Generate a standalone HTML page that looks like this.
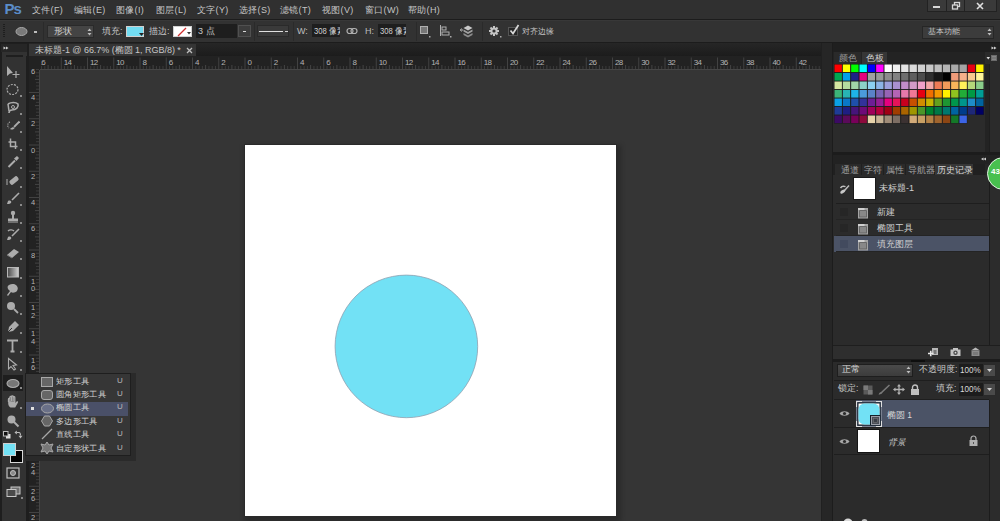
<!DOCTYPE html>
<html><head><meta charset="utf-8"><style>
html,body{margin:0;padding:0;width:1000px;height:521px;overflow:hidden;background:#323232;}
body{position:relative;font-family:"Liberation Sans",sans-serif;}
div{position:absolute;}
.t{white-space:nowrap;line-height:1.1;}
</style></head><body>
<div style="left:0px;top:0px;width:1000px;height:521px;background:#323232;"></div>
<div style="left:0px;top:0px;width:1000px;height:19px;background:#303030;"></div>
<div style="left:0px;top:19px;width:1000px;height:1px;background:#1c1c1c;"></div>
<div class="t" style="left:4.5px;top:0.5px;font-size:15px;color:#5b8dc9;font-weight:bold;letter-spacing:-1px;">Ps</div>
<div class="t" style="left:32px;top:5.5px;font-size:9px;color:#c4c4c4;letter-spacing:0.3px;">文件(F)</div>
<div class="t" style="left:74px;top:5.5px;font-size:9px;color:#c4c4c4;letter-spacing:0.3px;">编辑(E)</div>
<div class="t" style="left:116px;top:5.5px;font-size:9px;color:#c4c4c4;letter-spacing:0.3px;">图像(I)</div>
<div class="t" style="left:156px;top:5.5px;font-size:9px;color:#c4c4c4;letter-spacing:0.3px;">图层(L)</div>
<div class="t" style="left:197px;top:5.5px;font-size:9px;color:#c4c4c4;letter-spacing:0.3px;">文字(Y)</div>
<div class="t" style="left:239px;top:5.5px;font-size:9px;color:#c4c4c4;letter-spacing:0.3px;">选择(S)</div>
<div class="t" style="left:280px;top:5.5px;font-size:9px;color:#c4c4c4;letter-spacing:0.3px;">滤镜(T)</div>
<div class="t" style="left:322px;top:5.5px;font-size:9px;color:#c4c4c4;letter-spacing:0.3px;">视图(V)</div>
<div class="t" style="left:365px;top:5.5px;font-size:9px;color:#c4c4c4;letter-spacing:0.3px;">窗口(W)</div>
<div class="t" style="left:408px;top:5.5px;font-size:9px;color:#c4c4c4;letter-spacing:0.3px;">帮助(H)</div>
<div style="left:927px;top:0px;width:70px;height:12px;background:#3a3a3a;border:1px solid #222;border-top:none;box-sizing:border-box;"></div>
<div style="left:946px;top:0px;width:1px;height:12px;background:#222;"></div>
<div style="left:964px;top:0px;width:1px;height:12px;background:#222;"></div>
<div style="left:933px;top:6px;width:7px;height:2px;background:#d8d8d8;"></div>
<svg style="position:absolute;left:951px;top:1px;" width="10" height="10" viewBox="0 0 10 10"><rect x="3.5" y="1.5" width="5" height="4" fill="none" stroke="#d8d8d8" stroke-width="1.3"/><rect x="1.5" y="4" width="5" height="4" fill="#3a3a3a" stroke="#d8d8d8" stroke-width="1.3"/></svg>
<svg style="position:absolute;left:976px;top:2px;" width="8" height="8" viewBox="0 0 8 8"><path d="M1 1L7 7M7 1L1 7" stroke="#e0e0e0" stroke-width="1.6"/></svg>
<div style="left:0px;top:20px;width:1000px;height:23px;background:#323232;"></div>
<div style="left:0px;top:20px;width:1000px;height:1px;background:#383838;"></div>
<div style="left:0px;top:42px;width:1000px;height:1px;background:#1c1c1c;"></div>
<div style="left:3px;top:24px;width:2px;height:1px;background:#1e1e1e;"></div>
<div style="left:3px;top:26px;width:2px;height:1px;background:#1e1e1e;"></div>
<div style="left:3px;top:28px;width:2px;height:1px;background:#1e1e1e;"></div>
<div style="left:3px;top:30px;width:2px;height:1px;background:#1e1e1e;"></div>
<div style="left:3px;top:32px;width:2px;height:1px;background:#1e1e1e;"></div>
<div style="left:3px;top:34px;width:2px;height:1px;background:#1e1e1e;"></div>
<div style="left:3px;top:36px;width:2px;height:1px;background:#1e1e1e;"></div>
<svg style="position:absolute;left:15px;top:26px;" width="14" height="11" viewBox="0 0 14 11"><ellipse cx="6.5" cy="5.5" rx="5.5" ry="4" fill="#7a7a7a" stroke="#a8a8a8" stroke-width="1"/></svg>
<div style="left:34px;top:31px;width:3px;height:2px;background:#bdbdbd;"></div>
<div style="left:43px;top:22px;width:1px;height:19px;background:#2a2a2a;"></div>
<div style="left:47px;top:25px;width:47px;height:13px;background:#444;border:1px solid #2a2a2a;box-sizing:border-box;"></div>
<div class="t" style="left:54px;top:27px;font-size:9px;color:#d0d0d0;">形状</div>
<svg style="position:absolute;left:87px;top:28px;" width="5" height="8" viewBox="0 0 5 8"><path d="M0.5 3L2.5 0.5L4.5 3ZM0.5 5L2.5 7.5L4.5 5Z" fill="#bdbdbd"/></svg>
<div class="t" style="left:102px;top:27px;font-size:9px;color:#c4c4c4;">填充:</div>
<div style="left:126px;top:26px;width:18px;height:11px;background:#72dcf2;border:1px solid #d0d0d0;box-sizing:border-box;"></div>
<svg style="position:absolute;left:139px;top:32px;" width="5" height="5" viewBox="0 0 5 5"><path d="M0 1H5L2.5 4Z" fill="#222"/></svg>
<div class="t" style="left:149px;top:27px;font-size:9px;color:#c4c4c4;">描边:</div>
<div style="left:173px;top:26px;width:19px;height:11px;background:#ffffff;border:1px solid #d0d0d0;box-sizing:border-box;"></div>
<svg style="position:absolute;left:173px;top:26px;" width="19" height="11" viewBox="0 0 19 11"><path d="M5 10L13 2" stroke="#d23030" stroke-width="1.3"/><path d="M14 6H18L16 8.5Z" fill="#333"/></svg>
<div style="left:196px;top:24px;width:41px;height:14px;background:#1e1e1e;"></div>
<div class="t" style="left:198px;top:27px;font-size:9px;color:#c8c8c8;">3 点</div>
<div style="left:238px;top:25px;width:13px;height:12px;background:#3c3c3c;border:1px solid #505050;box-sizing:border-box;"></div>
<div style="left:243px;top:30.5px;width:3px;height:1.5px;background:#d8d8d8;"></div>
<div style="left:254px;top:22px;width:1px;height:19px;background:#2a2a2a;"></div>
<div style="left:257px;top:25px;width:32px;height:12px;background:#3a3a3a;border:1px solid #2a2a2a;box-sizing:border-box;"></div>
<div style="left:259px;top:30.5px;width:24px;height:1.7px;background:#e0e0e0;"></div>
<div style="left:285px;top:31px;width:3px;height:1px;background:#cfcfcf;"></div>
<div style="left:293px;top:22px;width:1px;height:19px;background:#2a2a2a;"></div>
<div class="t" style="left:297px;top:27px;font-size:9px;color:#bdbdbd;">W:</div>
<div style="left:312px;top:24px;width:28px;height:13px;background:#1e1e1e;overflow:hidden;"></div>
<div style="left:312px;top:24px;width:28px;height:13px;overflow:hidden;"><div class="t" style="left:1.5px;top:2.6px;font-size:9px;color:#d0d0d0;transform:scaleX(0.85);transform-origin:0 0;">308 像素</div></div>
<svg style="position:absolute;left:346px;top:27px;" width="12" height="8" viewBox="0 0 12 8"><rect x="1" y="1.5" width="6" height="5" rx="2.5" fill="none" stroke="#b0b0b0" stroke-width="1.2"/><rect x="5" y="1.5" width="6" height="5" rx="2.5" fill="none" stroke="#b0b0b0" stroke-width="1.2"/></svg>
<div class="t" style="left:365px;top:27px;font-size:9px;color:#bdbdbd;">H:</div>
<div style="left:378px;top:24px;width:28px;height:13px;background:#1e1e1e;overflow:hidden;"></div>
<div style="left:378px;top:24px;width:28px;height:13px;overflow:hidden;"><div class="t" style="left:1.5px;top:2.6px;font-size:9px;color:#d0d0d0;transform:scaleX(0.85);transform-origin:0 0;">308 像素</div></div>
<div style="left:416px;top:22px;width:1px;height:19px;background:#2a2a2a;"></div>
<svg style="position:absolute;left:419px;top:25px;" width="12" height="13" viewBox="0 0 12 13"><rect x="1.5" y="1.5" width="7" height="7" fill="#777" stroke="#b0b0b0"/><rect x="10" y="11" width="1.5" height="1.5" fill="#aaa"/></svg>
<svg style="position:absolute;left:439px;top:24px;" width="13" height="14" viewBox="0 0 13 14"><path d="M1.5 1V12" stroke="#b0b0b0"/><rect x="3" y="3" width="4" height="3" fill="none" stroke="#b0b0b0"/><rect x="3" y="8" width="7" height="3" fill="none" stroke="#b0b0b0"/><rect x="11" y="12" width="1.5" height="1.5" fill="#aaa"/></svg>
<svg style="position:absolute;left:460px;top:24px;" width="15" height="15" viewBox="0 0 15 15"><path d="M8 1.5L12.5 4L8 6.5L3.5 4Z" fill="#c8c8c8"/><path d="M3.5 5.5L8 8L12.5 5.5V7.5L8 10L3.5 7.5Z" fill="#a0a0a0"/><path d="M3.5 9L8 11.5L12.5 9V11L8 13.5L3.5 11Z" fill="#8c8c8c"/><path d="M0.5 6H3M1.5 4.5L0.5 6L1.5 7.5" stroke="#bbb" stroke-width="1"/></svg>
<div style="left:482px;top:22px;width:1px;height:19px;background:#2a2a2a;"></div>
<svg style="position:absolute;left:489px;top:26px;" width="13" height="12" viewBox="0 0 13 12"><g fill="#c4c4c4"><circle cx="5" cy="5" r="3.6"/><rect x="4" y="0" width="2" height="10"/><rect x="0" y="4" width="10" height="2"/><rect x="4" y="0" width="2" height="10" transform="rotate(45 5 5)"/><rect x="4" y="0" width="2" height="10" transform="rotate(-45 5 5)"/></g><circle cx="5" cy="5" r="1.6" fill="#323232"/><rect x="11" y="10" width="1.5" height="1.5" fill="#aaa"/></svg>
<div style="left:508px;top:27px;width:10px;height:9px;background:#262626;border:1px solid #555;box-sizing:border-box;"></div>
<svg style="position:absolute;left:508px;top:23px;" width="13" height="13" viewBox="0 0 13 13"><path d="M2.5 7.5L5 10.5L10.5 2" fill="none" stroke="#d8d8d8" stroke-width="1.7"/></svg>
<div class="t" style="left:522px;top:28px;font-size:8px;color:#c4c4c4;">对齐边缘</div>
<div style="left:922px;top:26px;width:72px;height:13px;background:#3c3c3c;border:1px solid #262626;box-sizing:border-box;"></div>
<div class="t" style="left:928px;top:28px;font-size:8px;color:#c4c4c4;">基本功能</div>
<svg style="position:absolute;left:987px;top:28px;" width="5" height="8" viewBox="0 0 5 8"><path d="M0.5 3L2.5 0.5L4.5 3ZM0.5 5L2.5 7.5L4.5 5Z" fill="#bdbdbd"/></svg>
<div style="left:0px;top:43px;width:29px;height:478px;background:#1e1e1e;"></div>
<div style="left:1px;top:44px;width:26px;height:8px;background:#262626;"></div>
<svg style="position:absolute;left:2.5px;top:45.5px;" width="6" height="4" viewBox="0 0 6 4"><path d="M0.5 0.5L3 2L0.5 3.5Z M3 0.5L5.5 2L3 3.5Z" fill="#d0d0d0"/></svg>
<div style="left:2px;top:52px;width:25px;height:469px;background:#323232;"></div>
<div style="left:6px;top:55px;width:17px;height:2px;background:#1e1e1e;"></div>
<div style="left:29px;top:43px;width:792px;height:13px;background:#1f1f1f;background:linear-gradient(#262626,#1c1c1c);"></div>
<div style="left:29px;top:44px;width:167px;height:12px;background:#353535;"></div>
<div class="t" style="left:35px;top:45.5px;font-size:9px;color:#c8c8c8;white-space:nowrap;letter-spacing:-0.03px;">未标题-1 @ 66.7% (椭圆 1, RGB/8) *</div>
<svg style="position:absolute;left:186px;top:47px;" width="7" height="7" viewBox="0 0 7 7"><path d="M1 1L6 6M6 1L1 6" stroke="#bdbdbd" stroke-width="1.3"/></svg>
<div style="left:29px;top:56px;width:792px;height:14px;background:#222222;"></div>
<div style="left:40px;top:69px;width:781px;height:1px;background:#464646;"></div>
<div style="left:40px;top:70px;width:781px;height:451px;background:#353535;"></div>
<svg style="position:absolute;left:0px;top:56px;" width="821" height="13" viewBox="0 0 821 13"><rect x="31.22" y="10" width="1" height="3" fill="#3c3c3c"/><rect x="34.50" y="1.5" width="1" height="11.5" fill="#424242"/><rect x="37.78" y="10" width="1" height="3" fill="#3c3c3c"/><rect x="41.06" y="10" width="1" height="3" fill="#3c3c3c"/><rect x="44.34" y="10" width="1" height="3" fill="#3c3c3c"/><rect x="47.62" y="9" width="1" height="4" fill="#444"/><rect x="50.91" y="10" width="1" height="3" fill="#3c3c3c"/><rect x="54.19" y="10" width="1" height="3" fill="#3c3c3c"/><rect x="57.47" y="10" width="1" height="3" fill="#3c3c3c"/><rect x="60.75" y="1.5" width="1" height="11.5" fill="#424242"/><rect x="64.03" y="10" width="1" height="3" fill="#3c3c3c"/><rect x="67.31" y="10" width="1" height="3" fill="#3c3c3c"/><rect x="70.59" y="10" width="1" height="3" fill="#3c3c3c"/><rect x="73.88" y="9" width="1" height="4" fill="#444"/><rect x="77.16" y="10" width="1" height="3" fill="#3c3c3c"/><rect x="80.44" y="10" width="1" height="3" fill="#3c3c3c"/><rect x="83.72" y="10" width="1" height="3" fill="#3c3c3c"/><rect x="87.00" y="1.5" width="1" height="11.5" fill="#424242"/><rect x="90.28" y="10" width="1" height="3" fill="#3c3c3c"/><rect x="93.56" y="10" width="1" height="3" fill="#3c3c3c"/><rect x="96.84" y="10" width="1" height="3" fill="#3c3c3c"/><rect x="100.12" y="9" width="1" height="4" fill="#444"/><rect x="103.41" y="10" width="1" height="3" fill="#3c3c3c"/><rect x="106.69" y="10" width="1" height="3" fill="#3c3c3c"/><rect x="109.97" y="10" width="1" height="3" fill="#3c3c3c"/><rect x="113.25" y="1.5" width="1" height="11.5" fill="#424242"/><rect x="116.53" y="10" width="1" height="3" fill="#3c3c3c"/><rect x="119.81" y="10" width="1" height="3" fill="#3c3c3c"/><rect x="123.09" y="10" width="1" height="3" fill="#3c3c3c"/><rect x="126.38" y="9" width="1" height="4" fill="#444"/><rect x="129.66" y="10" width="1" height="3" fill="#3c3c3c"/><rect x="132.94" y="10" width="1" height="3" fill="#3c3c3c"/><rect x="136.22" y="10" width="1" height="3" fill="#3c3c3c"/><rect x="139.50" y="1.5" width="1" height="11.5" fill="#424242"/><rect x="142.78" y="10" width="1" height="3" fill="#3c3c3c"/><rect x="146.06" y="10" width="1" height="3" fill="#3c3c3c"/><rect x="149.34" y="10" width="1" height="3" fill="#3c3c3c"/><rect x="152.62" y="9" width="1" height="4" fill="#444"/><rect x="155.91" y="10" width="1" height="3" fill="#3c3c3c"/><rect x="159.19" y="10" width="1" height="3" fill="#3c3c3c"/><rect x="162.47" y="10" width="1" height="3" fill="#3c3c3c"/><rect x="165.75" y="1.5" width="1" height="11.5" fill="#424242"/><rect x="169.03" y="10" width="1" height="3" fill="#3c3c3c"/><rect x="172.31" y="10" width="1" height="3" fill="#3c3c3c"/><rect x="175.59" y="10" width="1" height="3" fill="#3c3c3c"/><rect x="178.88" y="9" width="1" height="4" fill="#444"/><rect x="182.16" y="10" width="1" height="3" fill="#3c3c3c"/><rect x="185.44" y="10" width="1" height="3" fill="#3c3c3c"/><rect x="188.72" y="10" width="1" height="3" fill="#3c3c3c"/><rect x="192.00" y="1.5" width="1" height="11.5" fill="#424242"/><rect x="195.28" y="10" width="1" height="3" fill="#3c3c3c"/><rect x="198.56" y="10" width="1" height="3" fill="#3c3c3c"/><rect x="201.84" y="10" width="1" height="3" fill="#3c3c3c"/><rect x="205.12" y="9" width="1" height="4" fill="#444"/><rect x="208.41" y="10" width="1" height="3" fill="#3c3c3c"/><rect x="211.69" y="10" width="1" height="3" fill="#3c3c3c"/><rect x="214.97" y="10" width="1" height="3" fill="#3c3c3c"/><rect x="218.25" y="1.5" width="1" height="11.5" fill="#424242"/><rect x="221.53" y="10" width="1" height="3" fill="#3c3c3c"/><rect x="224.81" y="10" width="1" height="3" fill="#3c3c3c"/><rect x="228.09" y="10" width="1" height="3" fill="#3c3c3c"/><rect x="231.38" y="9" width="1" height="4" fill="#444"/><rect x="234.66" y="10" width="1" height="3" fill="#3c3c3c"/><rect x="237.94" y="10" width="1" height="3" fill="#3c3c3c"/><rect x="241.22" y="10" width="1" height="3" fill="#3c3c3c"/><rect x="244.50" y="1.5" width="1" height="11.5" fill="#424242"/><rect x="247.78" y="10" width="1" height="3" fill="#3c3c3c"/><rect x="251.06" y="10" width="1" height="3" fill="#3c3c3c"/><rect x="254.34" y="10" width="1" height="3" fill="#3c3c3c"/><rect x="257.62" y="9" width="1" height="4" fill="#444"/><rect x="260.91" y="10" width="1" height="3" fill="#3c3c3c"/><rect x="264.19" y="10" width="1" height="3" fill="#3c3c3c"/><rect x="267.47" y="10" width="1" height="3" fill="#3c3c3c"/><rect x="270.75" y="1.5" width="1" height="11.5" fill="#424242"/><rect x="274.03" y="10" width="1" height="3" fill="#3c3c3c"/><rect x="277.31" y="10" width="1" height="3" fill="#3c3c3c"/><rect x="280.59" y="10" width="1" height="3" fill="#3c3c3c"/><rect x="283.88" y="9" width="1" height="4" fill="#444"/><rect x="287.16" y="10" width="1" height="3" fill="#3c3c3c"/><rect x="290.44" y="10" width="1" height="3" fill="#3c3c3c"/><rect x="293.72" y="10" width="1" height="3" fill="#3c3c3c"/><rect x="297.00" y="1.5" width="1" height="11.5" fill="#424242"/><rect x="300.28" y="10" width="1" height="3" fill="#3c3c3c"/><rect x="303.56" y="10" width="1" height="3" fill="#3c3c3c"/><rect x="306.84" y="10" width="1" height="3" fill="#3c3c3c"/><rect x="310.12" y="9" width="1" height="4" fill="#444"/><rect x="313.41" y="10" width="1" height="3" fill="#3c3c3c"/><rect x="316.69" y="10" width="1" height="3" fill="#3c3c3c"/><rect x="319.97" y="10" width="1" height="3" fill="#3c3c3c"/><rect x="323.25" y="1.5" width="1" height="11.5" fill="#424242"/><rect x="326.53" y="10" width="1" height="3" fill="#3c3c3c"/><rect x="329.81" y="10" width="1" height="3" fill="#3c3c3c"/><rect x="333.09" y="10" width="1" height="3" fill="#3c3c3c"/><rect x="336.38" y="9" width="1" height="4" fill="#444"/><rect x="339.66" y="10" width="1" height="3" fill="#3c3c3c"/><rect x="342.94" y="10" width="1" height="3" fill="#3c3c3c"/><rect x="346.22" y="10" width="1" height="3" fill="#3c3c3c"/><rect x="349.50" y="1.5" width="1" height="11.5" fill="#424242"/><rect x="352.78" y="10" width="1" height="3" fill="#3c3c3c"/><rect x="356.06" y="10" width="1" height="3" fill="#3c3c3c"/><rect x="359.34" y="10" width="1" height="3" fill="#3c3c3c"/><rect x="362.62" y="9" width="1" height="4" fill="#444"/><rect x="365.91" y="10" width="1" height="3" fill="#3c3c3c"/><rect x="369.19" y="10" width="1" height="3" fill="#3c3c3c"/><rect x="372.47" y="10" width="1" height="3" fill="#3c3c3c"/><rect x="375.75" y="1.5" width="1" height="11.5" fill="#424242"/><rect x="379.03" y="10" width="1" height="3" fill="#3c3c3c"/><rect x="382.31" y="10" width="1" height="3" fill="#3c3c3c"/><rect x="385.59" y="10" width="1" height="3" fill="#3c3c3c"/><rect x="388.88" y="9" width="1" height="4" fill="#444"/><rect x="392.16" y="10" width="1" height="3" fill="#3c3c3c"/><rect x="395.44" y="10" width="1" height="3" fill="#3c3c3c"/><rect x="398.72" y="10" width="1" height="3" fill="#3c3c3c"/><rect x="402.00" y="1.5" width="1" height="11.5" fill="#424242"/><rect x="405.28" y="10" width="1" height="3" fill="#3c3c3c"/><rect x="408.56" y="10" width="1" height="3" fill="#3c3c3c"/><rect x="411.84" y="10" width="1" height="3" fill="#3c3c3c"/><rect x="415.12" y="9" width="1" height="4" fill="#444"/><rect x="418.41" y="10" width="1" height="3" fill="#3c3c3c"/><rect x="421.69" y="10" width="1" height="3" fill="#3c3c3c"/><rect x="424.97" y="10" width="1" height="3" fill="#3c3c3c"/><rect x="428.25" y="1.5" width="1" height="11.5" fill="#424242"/><rect x="431.53" y="10" width="1" height="3" fill="#3c3c3c"/><rect x="434.81" y="10" width="1" height="3" fill="#3c3c3c"/><rect x="438.09" y="10" width="1" height="3" fill="#3c3c3c"/><rect x="441.38" y="9" width="1" height="4" fill="#444"/><rect x="444.66" y="10" width="1" height="3" fill="#3c3c3c"/><rect x="447.94" y="10" width="1" height="3" fill="#3c3c3c"/><rect x="451.22" y="10" width="1" height="3" fill="#3c3c3c"/><rect x="454.50" y="1.5" width="1" height="11.5" fill="#424242"/><rect x="457.78" y="10" width="1" height="3" fill="#3c3c3c"/><rect x="461.06" y="10" width="1" height="3" fill="#3c3c3c"/><rect x="464.34" y="10" width="1" height="3" fill="#3c3c3c"/><rect x="467.62" y="9" width="1" height="4" fill="#444"/><rect x="470.91" y="10" width="1" height="3" fill="#3c3c3c"/><rect x="474.19" y="10" width="1" height="3" fill="#3c3c3c"/><rect x="477.47" y="10" width="1" height="3" fill="#3c3c3c"/><rect x="480.75" y="1.5" width="1" height="11.5" fill="#424242"/><rect x="484.03" y="10" width="1" height="3" fill="#3c3c3c"/><rect x="487.31" y="10" width="1" height="3" fill="#3c3c3c"/><rect x="490.59" y="10" width="1" height="3" fill="#3c3c3c"/><rect x="493.88" y="9" width="1" height="4" fill="#444"/><rect x="497.16" y="10" width="1" height="3" fill="#3c3c3c"/><rect x="500.44" y="10" width="1" height="3" fill="#3c3c3c"/><rect x="503.72" y="10" width="1" height="3" fill="#3c3c3c"/><rect x="507.00" y="1.5" width="1" height="11.5" fill="#424242"/><rect x="510.28" y="10" width="1" height="3" fill="#3c3c3c"/><rect x="513.56" y="10" width="1" height="3" fill="#3c3c3c"/><rect x="516.84" y="10" width="1" height="3" fill="#3c3c3c"/><rect x="520.12" y="9" width="1" height="4" fill="#444"/><rect x="523.41" y="10" width="1" height="3" fill="#3c3c3c"/><rect x="526.69" y="10" width="1" height="3" fill="#3c3c3c"/><rect x="529.97" y="10" width="1" height="3" fill="#3c3c3c"/><rect x="533.25" y="1.5" width="1" height="11.5" fill="#424242"/><rect x="536.53" y="10" width="1" height="3" fill="#3c3c3c"/><rect x="539.81" y="10" width="1" height="3" fill="#3c3c3c"/><rect x="543.09" y="10" width="1" height="3" fill="#3c3c3c"/><rect x="546.38" y="9" width="1" height="4" fill="#444"/><rect x="549.66" y="10" width="1" height="3" fill="#3c3c3c"/><rect x="552.94" y="10" width="1" height="3" fill="#3c3c3c"/><rect x="556.22" y="10" width="1" height="3" fill="#3c3c3c"/><rect x="559.50" y="1.5" width="1" height="11.5" fill="#424242"/><rect x="562.78" y="10" width="1" height="3" fill="#3c3c3c"/><rect x="566.06" y="10" width="1" height="3" fill="#3c3c3c"/><rect x="569.34" y="10" width="1" height="3" fill="#3c3c3c"/><rect x="572.62" y="9" width="1" height="4" fill="#444"/><rect x="575.91" y="10" width="1" height="3" fill="#3c3c3c"/><rect x="579.19" y="10" width="1" height="3" fill="#3c3c3c"/><rect x="582.47" y="10" width="1" height="3" fill="#3c3c3c"/><rect x="585.75" y="1.5" width="1" height="11.5" fill="#424242"/><rect x="589.03" y="10" width="1" height="3" fill="#3c3c3c"/><rect x="592.31" y="10" width="1" height="3" fill="#3c3c3c"/><rect x="595.59" y="10" width="1" height="3" fill="#3c3c3c"/><rect x="598.88" y="9" width="1" height="4" fill="#444"/><rect x="602.16" y="10" width="1" height="3" fill="#3c3c3c"/><rect x="605.44" y="10" width="1" height="3" fill="#3c3c3c"/><rect x="608.72" y="10" width="1" height="3" fill="#3c3c3c"/><rect x="612.00" y="1.5" width="1" height="11.5" fill="#424242"/><rect x="615.28" y="10" width="1" height="3" fill="#3c3c3c"/><rect x="618.56" y="10" width="1" height="3" fill="#3c3c3c"/><rect x="621.84" y="10" width="1" height="3" fill="#3c3c3c"/><rect x="625.12" y="9" width="1" height="4" fill="#444"/><rect x="628.41" y="10" width="1" height="3" fill="#3c3c3c"/><rect x="631.69" y="10" width="1" height="3" fill="#3c3c3c"/><rect x="634.97" y="10" width="1" height="3" fill="#3c3c3c"/><rect x="638.25" y="1.5" width="1" height="11.5" fill="#424242"/><rect x="641.53" y="10" width="1" height="3" fill="#3c3c3c"/><rect x="644.81" y="10" width="1" height="3" fill="#3c3c3c"/><rect x="648.09" y="10" width="1" height="3" fill="#3c3c3c"/><rect x="651.38" y="9" width="1" height="4" fill="#444"/><rect x="654.66" y="10" width="1" height="3" fill="#3c3c3c"/><rect x="657.94" y="10" width="1" height="3" fill="#3c3c3c"/><rect x="661.22" y="10" width="1" height="3" fill="#3c3c3c"/><rect x="664.50" y="1.5" width="1" height="11.5" fill="#424242"/><rect x="667.78" y="10" width="1" height="3" fill="#3c3c3c"/><rect x="671.06" y="10" width="1" height="3" fill="#3c3c3c"/><rect x="674.34" y="10" width="1" height="3" fill="#3c3c3c"/><rect x="677.62" y="9" width="1" height="4" fill="#444"/><rect x="680.91" y="10" width="1" height="3" fill="#3c3c3c"/><rect x="684.19" y="10" width="1" height="3" fill="#3c3c3c"/><rect x="687.47" y="10" width="1" height="3" fill="#3c3c3c"/><rect x="690.75" y="1.5" width="1" height="11.5" fill="#424242"/><rect x="694.03" y="10" width="1" height="3" fill="#3c3c3c"/><rect x="697.31" y="10" width="1" height="3" fill="#3c3c3c"/><rect x="700.59" y="10" width="1" height="3" fill="#3c3c3c"/><rect x="703.88" y="9" width="1" height="4" fill="#444"/><rect x="707.16" y="10" width="1" height="3" fill="#3c3c3c"/><rect x="710.44" y="10" width="1" height="3" fill="#3c3c3c"/><rect x="713.72" y="10" width="1" height="3" fill="#3c3c3c"/><rect x="717.00" y="1.5" width="1" height="11.5" fill="#424242"/><rect x="720.28" y="10" width="1" height="3" fill="#3c3c3c"/><rect x="723.56" y="10" width="1" height="3" fill="#3c3c3c"/><rect x="726.84" y="10" width="1" height="3" fill="#3c3c3c"/><rect x="730.12" y="9" width="1" height="4" fill="#444"/><rect x="733.41" y="10" width="1" height="3" fill="#3c3c3c"/><rect x="736.69" y="10" width="1" height="3" fill="#3c3c3c"/><rect x="739.97" y="10" width="1" height="3" fill="#3c3c3c"/><rect x="743.25" y="1.5" width="1" height="11.5" fill="#424242"/><rect x="746.53" y="10" width="1" height="3" fill="#3c3c3c"/><rect x="749.81" y="10" width="1" height="3" fill="#3c3c3c"/><rect x="753.09" y="10" width="1" height="3" fill="#3c3c3c"/><rect x="756.38" y="9" width="1" height="4" fill="#444"/><rect x="759.66" y="10" width="1" height="3" fill="#3c3c3c"/><rect x="762.94" y="10" width="1" height="3" fill="#3c3c3c"/><rect x="766.22" y="10" width="1" height="3" fill="#3c3c3c"/><rect x="769.50" y="1.5" width="1" height="11.5" fill="#424242"/><rect x="772.78" y="10" width="1" height="3" fill="#3c3c3c"/><rect x="776.06" y="10" width="1" height="3" fill="#3c3c3c"/><rect x="779.34" y="10" width="1" height="3" fill="#3c3c3c"/><rect x="782.62" y="9" width="1" height="4" fill="#444"/><rect x="785.91" y="10" width="1" height="3" fill="#3c3c3c"/><rect x="789.19" y="10" width="1" height="3" fill="#3c3c3c"/><rect x="792.47" y="10" width="1" height="3" fill="#3c3c3c"/><rect x="795.75" y="1.5" width="1" height="11.5" fill="#424242"/><rect x="799.03" y="10" width="1" height="3" fill="#3c3c3c"/><rect x="802.31" y="10" width="1" height="3" fill="#3c3c3c"/><rect x="805.59" y="10" width="1" height="3" fill="#3c3c3c"/><rect x="808.88" y="9" width="1" height="4" fill="#444"/><rect x="812.16" y="10" width="1" height="3" fill="#3c3c3c"/><rect x="815.44" y="10" width="1" height="3" fill="#3c3c3c"/><rect x="818.72" y="10" width="1" height="3" fill="#3c3c3c"/></svg>
<div style="left:41px;top:56px;width:780px;height:13px;overflow:hidden;">
<div class="t" style="left:-3.5px;top:2px;font-size:8px;color:#b4b4b4;line-height:9px;letter-spacing:-0.8px;">16</div>
<div class="t" style="left:22.75px;top:2px;font-size:8px;color:#b4b4b4;line-height:9px;letter-spacing:-0.8px;">14</div>
<div class="t" style="left:49.0px;top:2px;font-size:8px;color:#b4b4b4;line-height:9px;letter-spacing:-0.8px;">12</div>
<div class="t" style="left:75.25px;top:2px;font-size:8px;color:#b4b4b4;line-height:9px;letter-spacing:-0.8px;">10</div>
<div class="t" style="left:101.5px;top:2px;font-size:8px;color:#b4b4b4;line-height:9px;letter-spacing:-0.8px;">8</div>
<div class="t" style="left:127.75px;top:2px;font-size:8px;color:#b4b4b4;line-height:9px;letter-spacing:-0.8px;">6</div>
<div class="t" style="left:154.0px;top:2px;font-size:8px;color:#b4b4b4;line-height:9px;letter-spacing:-0.8px;">4</div>
<div class="t" style="left:180.25px;top:2px;font-size:8px;color:#b4b4b4;line-height:9px;letter-spacing:-0.8px;">2</div>
<div class="t" style="left:206.5px;top:2px;font-size:8px;color:#b4b4b4;line-height:9px;letter-spacing:-0.8px;">0</div>
<div class="t" style="left:232.75px;top:2px;font-size:8px;color:#b4b4b4;line-height:9px;letter-spacing:-0.8px;">2</div>
<div class="t" style="left:259.0px;top:2px;font-size:8px;color:#b4b4b4;line-height:9px;letter-spacing:-0.8px;">4</div>
<div class="t" style="left:285.25px;top:2px;font-size:8px;color:#b4b4b4;line-height:9px;letter-spacing:-0.8px;">6</div>
<div class="t" style="left:311.5px;top:2px;font-size:8px;color:#b4b4b4;line-height:9px;letter-spacing:-0.8px;">8</div>
<div class="t" style="left:337.75px;top:2px;font-size:8px;color:#b4b4b4;line-height:9px;letter-spacing:-0.8px;">10</div>
<div class="t" style="left:364.0px;top:2px;font-size:8px;color:#b4b4b4;line-height:9px;letter-spacing:-0.8px;">12</div>
<div class="t" style="left:390.25px;top:2px;font-size:8px;color:#b4b4b4;line-height:9px;letter-spacing:-0.8px;">14</div>
<div class="t" style="left:416.5px;top:2px;font-size:8px;color:#b4b4b4;line-height:9px;letter-spacing:-0.8px;">16</div>
<div class="t" style="left:442.75px;top:2px;font-size:8px;color:#b4b4b4;line-height:9px;letter-spacing:-0.8px;">18</div>
<div class="t" style="left:469.0px;top:2px;font-size:8px;color:#b4b4b4;line-height:9px;letter-spacing:-0.8px;">20</div>
<div class="t" style="left:495.25px;top:2px;font-size:8px;color:#b4b4b4;line-height:9px;letter-spacing:-0.8px;">22</div>
<div class="t" style="left:521.5px;top:2px;font-size:8px;color:#b4b4b4;line-height:9px;letter-spacing:-0.8px;">24</div>
<div class="t" style="left:547.75px;top:2px;font-size:8px;color:#b4b4b4;line-height:9px;letter-spacing:-0.8px;">26</div>
<div class="t" style="left:574.0px;top:2px;font-size:8px;color:#b4b4b4;line-height:9px;letter-spacing:-0.8px;">28</div>
<div class="t" style="left:600.25px;top:2px;font-size:8px;color:#b4b4b4;line-height:9px;letter-spacing:-0.8px;">30</div>
<div class="t" style="left:626.5px;top:2px;font-size:8px;color:#b4b4b4;line-height:9px;letter-spacing:-0.8px;">32</div>
<div class="t" style="left:652.75px;top:2px;font-size:8px;color:#b4b4b4;line-height:9px;letter-spacing:-0.8px;">34</div>
<div class="t" style="left:679.0px;top:2px;font-size:8px;color:#b4b4b4;line-height:9px;letter-spacing:-0.8px;">36</div>
<div class="t" style="left:705.25px;top:2px;font-size:8px;color:#b4b4b4;line-height:9px;letter-spacing:-0.8px;">38</div>
<div class="t" style="left:731.5px;top:2px;font-size:8px;color:#b4b4b4;line-height:9px;letter-spacing:-0.8px;">40</div>
<div class="t" style="left:757.75px;top:2px;font-size:8px;color:#b4b4b4;line-height:9px;letter-spacing:-0.8px;">42</div>
</div>
<div style="left:26px;top:56px;width:3px;height:465px;background:#1e1e1e;"></div>
<div style="left:29px;top:56px;width:11px;height:465px;background:#222222;"></div>
<div style="left:39px;top:70px;width:1px;height:451px;background:#464646;"></div>
<div style="left:29px;top:56px;width:11px;height:13px;background:#222222;"></div>
<svg style="position:absolute;left:29px;top:0px;" width="11" height="521" viewBox="0 0 11 521"><rect x="7" y="69.03" width="3" height="1" fill="#3c3c3c"/><rect x="7" y="72.31" width="3" height="1" fill="#3c3c3c"/><rect x="7" y="75.59" width="3" height="1" fill="#3c3c3c"/><rect x="6" y="78.88" width="4" height="1" fill="#444"/><rect x="7" y="82.16" width="3" height="1" fill="#3c3c3c"/><rect x="7" y="85.44" width="3" height="1" fill="#3c3c3c"/><rect x="7" y="88.72" width="3" height="1" fill="#3c3c3c"/><rect x="0" y="92.00" width="11" height="1" fill="#424242"/><rect x="7" y="95.28" width="3" height="1" fill="#3c3c3c"/><rect x="7" y="98.56" width="3" height="1" fill="#3c3c3c"/><rect x="7" y="101.84" width="3" height="1" fill="#3c3c3c"/><rect x="6" y="105.12" width="4" height="1" fill="#444"/><rect x="7" y="108.41" width="3" height="1" fill="#3c3c3c"/><rect x="7" y="111.69" width="3" height="1" fill="#3c3c3c"/><rect x="7" y="114.97" width="3" height="1" fill="#3c3c3c"/><rect x="0" y="118.25" width="11" height="1" fill="#424242"/><rect x="7" y="121.53" width="3" height="1" fill="#3c3c3c"/><rect x="7" y="124.81" width="3" height="1" fill="#3c3c3c"/><rect x="7" y="128.09" width="3" height="1" fill="#3c3c3c"/><rect x="6" y="131.38" width="4" height="1" fill="#444"/><rect x="7" y="134.66" width="3" height="1" fill="#3c3c3c"/><rect x="7" y="137.94" width="3" height="1" fill="#3c3c3c"/><rect x="7" y="141.22" width="3" height="1" fill="#3c3c3c"/><rect x="0" y="144.50" width="11" height="1" fill="#424242"/><rect x="7" y="147.78" width="3" height="1" fill="#3c3c3c"/><rect x="7" y="151.06" width="3" height="1" fill="#3c3c3c"/><rect x="7" y="154.34" width="3" height="1" fill="#3c3c3c"/><rect x="6" y="157.62" width="4" height="1" fill="#444"/><rect x="7" y="160.91" width="3" height="1" fill="#3c3c3c"/><rect x="7" y="164.19" width="3" height="1" fill="#3c3c3c"/><rect x="7" y="167.47" width="3" height="1" fill="#3c3c3c"/><rect x="0" y="170.75" width="11" height="1" fill="#424242"/><rect x="7" y="174.03" width="3" height="1" fill="#3c3c3c"/><rect x="7" y="177.31" width="3" height="1" fill="#3c3c3c"/><rect x="7" y="180.59" width="3" height="1" fill="#3c3c3c"/><rect x="6" y="183.88" width="4" height="1" fill="#444"/><rect x="7" y="187.16" width="3" height="1" fill="#3c3c3c"/><rect x="7" y="190.44" width="3" height="1" fill="#3c3c3c"/><rect x="7" y="193.72" width="3" height="1" fill="#3c3c3c"/><rect x="0" y="197.00" width="11" height="1" fill="#424242"/><rect x="7" y="200.28" width="3" height="1" fill="#3c3c3c"/><rect x="7" y="203.56" width="3" height="1" fill="#3c3c3c"/><rect x="7" y="206.84" width="3" height="1" fill="#3c3c3c"/><rect x="6" y="210.12" width="4" height="1" fill="#444"/><rect x="7" y="213.41" width="3" height="1" fill="#3c3c3c"/><rect x="7" y="216.69" width="3" height="1" fill="#3c3c3c"/><rect x="7" y="219.97" width="3" height="1" fill="#3c3c3c"/><rect x="0" y="223.25" width="11" height="1" fill="#424242"/><rect x="7" y="226.53" width="3" height="1" fill="#3c3c3c"/><rect x="7" y="229.81" width="3" height="1" fill="#3c3c3c"/><rect x="7" y="233.09" width="3" height="1" fill="#3c3c3c"/><rect x="6" y="236.38" width="4" height="1" fill="#444"/><rect x="7" y="239.66" width="3" height="1" fill="#3c3c3c"/><rect x="7" y="242.94" width="3" height="1" fill="#3c3c3c"/><rect x="7" y="246.22" width="3" height="1" fill="#3c3c3c"/><rect x="0" y="249.50" width="11" height="1" fill="#424242"/><rect x="7" y="252.78" width="3" height="1" fill="#3c3c3c"/><rect x="7" y="256.06" width="3" height="1" fill="#3c3c3c"/><rect x="7" y="259.34" width="3" height="1" fill="#3c3c3c"/><rect x="6" y="262.62" width="4" height="1" fill="#444"/><rect x="7" y="265.91" width="3" height="1" fill="#3c3c3c"/><rect x="7" y="269.19" width="3" height="1" fill="#3c3c3c"/><rect x="7" y="272.47" width="3" height="1" fill="#3c3c3c"/><rect x="0" y="275.75" width="11" height="1" fill="#424242"/><rect x="7" y="279.03" width="3" height="1" fill="#3c3c3c"/><rect x="7" y="282.31" width="3" height="1" fill="#3c3c3c"/><rect x="7" y="285.59" width="3" height="1" fill="#3c3c3c"/><rect x="6" y="288.88" width="4" height="1" fill="#444"/><rect x="7" y="292.16" width="3" height="1" fill="#3c3c3c"/><rect x="7" y="295.44" width="3" height="1" fill="#3c3c3c"/><rect x="7" y="298.72" width="3" height="1" fill="#3c3c3c"/><rect x="0" y="302.00" width="11" height="1" fill="#424242"/><rect x="7" y="305.28" width="3" height="1" fill="#3c3c3c"/><rect x="7" y="308.56" width="3" height="1" fill="#3c3c3c"/><rect x="7" y="311.84" width="3" height="1" fill="#3c3c3c"/><rect x="6" y="315.12" width="4" height="1" fill="#444"/><rect x="7" y="318.41" width="3" height="1" fill="#3c3c3c"/><rect x="7" y="321.69" width="3" height="1" fill="#3c3c3c"/><rect x="7" y="324.97" width="3" height="1" fill="#3c3c3c"/><rect x="0" y="328.25" width="11" height="1" fill="#424242"/><rect x="7" y="331.53" width="3" height="1" fill="#3c3c3c"/><rect x="7" y="334.81" width="3" height="1" fill="#3c3c3c"/><rect x="7" y="338.09" width="3" height="1" fill="#3c3c3c"/><rect x="6" y="341.38" width="4" height="1" fill="#444"/><rect x="7" y="344.66" width="3" height="1" fill="#3c3c3c"/><rect x="7" y="347.94" width="3" height="1" fill="#3c3c3c"/><rect x="7" y="351.22" width="3" height="1" fill="#3c3c3c"/><rect x="0" y="354.50" width="11" height="1" fill="#424242"/><rect x="7" y="357.78" width="3" height="1" fill="#3c3c3c"/><rect x="7" y="361.06" width="3" height="1" fill="#3c3c3c"/><rect x="7" y="364.34" width="3" height="1" fill="#3c3c3c"/><rect x="6" y="367.62" width="4" height="1" fill="#444"/><rect x="7" y="370.91" width="3" height="1" fill="#3c3c3c"/><rect x="7" y="374.19" width="3" height="1" fill="#3c3c3c"/><rect x="7" y="377.47" width="3" height="1" fill="#3c3c3c"/><rect x="0" y="380.75" width="11" height="1" fill="#424242"/><rect x="7" y="384.03" width="3" height="1" fill="#3c3c3c"/><rect x="7" y="387.31" width="3" height="1" fill="#3c3c3c"/><rect x="7" y="390.59" width="3" height="1" fill="#3c3c3c"/><rect x="6" y="393.88" width="4" height="1" fill="#444"/><rect x="7" y="397.16" width="3" height="1" fill="#3c3c3c"/><rect x="7" y="400.44" width="3" height="1" fill="#3c3c3c"/><rect x="7" y="403.72" width="3" height="1" fill="#3c3c3c"/><rect x="0" y="407.00" width="11" height="1" fill="#424242"/><rect x="7" y="410.28" width="3" height="1" fill="#3c3c3c"/><rect x="7" y="413.56" width="3" height="1" fill="#3c3c3c"/><rect x="7" y="416.84" width="3" height="1" fill="#3c3c3c"/><rect x="6" y="420.12" width="4" height="1" fill="#444"/><rect x="7" y="423.41" width="3" height="1" fill="#3c3c3c"/><rect x="7" y="426.69" width="3" height="1" fill="#3c3c3c"/><rect x="7" y="429.97" width="3" height="1" fill="#3c3c3c"/><rect x="0" y="433.25" width="11" height="1" fill="#424242"/><rect x="7" y="436.53" width="3" height="1" fill="#3c3c3c"/><rect x="7" y="439.81" width="3" height="1" fill="#3c3c3c"/><rect x="7" y="443.09" width="3" height="1" fill="#3c3c3c"/><rect x="6" y="446.38" width="4" height="1" fill="#444"/><rect x="7" y="449.66" width="3" height="1" fill="#3c3c3c"/><rect x="7" y="452.94" width="3" height="1" fill="#3c3c3c"/><rect x="7" y="456.22" width="3" height="1" fill="#3c3c3c"/><rect x="0" y="459.50" width="11" height="1" fill="#424242"/><rect x="7" y="462.78" width="3" height="1" fill="#3c3c3c"/><rect x="7" y="466.06" width="3" height="1" fill="#3c3c3c"/><rect x="7" y="469.34" width="3" height="1" fill="#3c3c3c"/><rect x="6" y="472.62" width="4" height="1" fill="#444"/><rect x="7" y="475.91" width="3" height="1" fill="#3c3c3c"/><rect x="7" y="479.19" width="3" height="1" fill="#3c3c3c"/><rect x="7" y="482.47" width="3" height="1" fill="#3c3c3c"/><rect x="0" y="485.75" width="11" height="1" fill="#424242"/><rect x="7" y="489.03" width="3" height="1" fill="#3c3c3c"/><rect x="7" y="492.31" width="3" height="1" fill="#3c3c3c"/><rect x="7" y="495.59" width="3" height="1" fill="#3c3c3c"/><rect x="6" y="498.88" width="4" height="1" fill="#444"/><rect x="7" y="502.16" width="3" height="1" fill="#3c3c3c"/><rect x="7" y="505.44" width="3" height="1" fill="#3c3c3c"/><rect x="7" y="508.72" width="3" height="1" fill="#3c3c3c"/><rect x="0" y="512.00" width="11" height="1" fill="#424242"/><rect x="7" y="515.28" width="3" height="1" fill="#3c3c3c"/><rect x="7" y="518.56" width="3" height="1" fill="#3c3c3c"/></svg>
<div class="t" style="left:30px;top:67.75px;width:6px;font-size:7.5px;line-height:7.5px;color:#b4b4b4;text-align:center;">6</div>
<div class="t" style="left:30px;top:94.00px;width:6px;font-size:7.5px;line-height:7.5px;color:#b4b4b4;text-align:center;">4</div>
<div class="t" style="left:30px;top:120.25px;width:6px;font-size:7.5px;line-height:7.5px;color:#b4b4b4;text-align:center;">2</div>
<div class="t" style="left:30px;top:146.50px;width:6px;font-size:7.5px;line-height:7.5px;color:#b4b4b4;text-align:center;">0</div>
<div class="t" style="left:30px;top:172.75px;width:6px;font-size:7.5px;line-height:7.5px;color:#b4b4b4;text-align:center;">2</div>
<div class="t" style="left:30px;top:199.00px;width:6px;font-size:7.5px;line-height:7.5px;color:#b4b4b4;text-align:center;">4</div>
<div class="t" style="left:30px;top:225.25px;width:6px;font-size:7.5px;line-height:7.5px;color:#b4b4b4;text-align:center;">6</div>
<div class="t" style="left:30px;top:251.50px;width:6px;font-size:7.5px;line-height:7.5px;color:#b4b4b4;text-align:center;">8</div>
<div class="t" style="left:30px;top:277.75px;width:6px;font-size:7.5px;line-height:7.5px;color:#b4b4b4;text-align:center;">1<br>0</div>
<div class="t" style="left:30px;top:304.00px;width:6px;font-size:7.5px;line-height:7.5px;color:#b4b4b4;text-align:center;">1<br>2</div>
<div class="t" style="left:30px;top:330.25px;width:6px;font-size:7.5px;line-height:7.5px;color:#b4b4b4;text-align:center;">1<br>4</div>
<div class="t" style="left:30px;top:356.50px;width:6px;font-size:7.5px;line-height:7.5px;color:#b4b4b4;text-align:center;">1<br>6</div>
<div class="t" style="left:30px;top:382.75px;width:6px;font-size:7.5px;line-height:7.5px;color:#b4b4b4;text-align:center;">1<br>8</div>
<div class="t" style="left:30px;top:409.00px;width:6px;font-size:7.5px;line-height:7.5px;color:#b4b4b4;text-align:center;">2<br>0</div>
<div class="t" style="left:30px;top:435.25px;width:6px;font-size:7.5px;line-height:7.5px;color:#b4b4b4;text-align:center;">2<br>2</div>
<div class="t" style="left:30px;top:461.50px;width:6px;font-size:7.5px;line-height:7.5px;color:#b4b4b4;text-align:center;">2<br>4</div>
<div class="t" style="left:30px;top:487.75px;width:6px;font-size:7.5px;line-height:7.5px;color:#b4b4b4;text-align:center;">2<br>6</div>
<div class="t" style="left:30px;top:514.00px;width:6px;font-size:7.5px;line-height:7.5px;color:#b4b4b4;text-align:center;">2<br>8</div>
<div style="left:241px;top:141px;width:382px;height:380px;background:#353535;box-shadow:none;"></div>
<div style="left:244px;top:144px;width:373px;height:373px;background:#2a2a2a;box-shadow:2px 3px 5px 2px rgba(0,0,0,0.22);"></div>
<div style="left:245px;top:145px;width:371px;height:371px;background:#ffffff;"></div>
<svg style="position:absolute;left:334px;top:274px;" width="145" height="145" viewBox="0 0 145 145"><circle cx="72.4" cy="72.4" r="71.3" fill="#72e1f5" stroke="#8fa0b0" stroke-width="0.8"/></svg>
<div style="left:821px;top:43px;width:179px;height:478px;background:#262626;"></div>
<div style="left:821px;top:43px;width:1px;height:478px;background:#202020;"></div>
<div style="left:832px;top:43px;width:1px;height:478px;background:#1c1c1c;"></div>
<div style="left:833px;top:43px;width:167px;height:9px;background:#1f1f1f;"></div>
<svg style="position:absolute;left:991px;top:45.5px;" width="6" height="4" viewBox="0 0 6 4"><path d="M0.5 0.5L3 2L0.5 3.5Z M3 0.5L5.5 2L3 3.5Z" fill="#d0d0d0"/></svg>
<div style="left:833px;top:52px;width:167px;height:100px;background:#2b2b2b;"></div>
<div style="left:833px;top:52px;width:152px;height:12px;background:#232323;"></div>
<div style="left:834px;top:52px;width:27px;height:12px;background:#2a2a2a;"></div>
<div class="t" style="left:839px;top:54px;font-size:8.5px;color:#9a9a9a;">颜色</div>
<div style="left:862px;top:52px;width:25px;height:12px;background:#363636;"></div>
<div class="t" style="left:866px;top:54px;font-size:8.5px;color:#d0d0d0;">色板</div>
<svg style="position:absolute;left:986px;top:55px;" width="12" height="7" viewBox="0 0 12 7"><path d="M0.5 2H4L2.25 4.5Z" fill="#ddd"/><rect x="5" y="0" width="6" height="6" fill="#6a6a6a"/><path d="M6 1.5H10M6 3H10M6 4.5H10" stroke="#999" stroke-width="0.6"/></svg>
<svg style="position:absolute;left:834px;top:64px;" width="150" height="60" viewBox="0 0 150 60"><rect x="0.00" y="0.00" width="8.33" height="8.5" fill="#1a1a1a"/><rect x="0.50" y="0.50" width="7.4" height="7.6" fill="#ff0000"/><rect x="8.33" y="0.00" width="8.33" height="8.5" fill="#1a1a1a"/><rect x="8.83" y="0.50" width="7.4" height="7.6" fill="#ffff00"/><rect x="16.66" y="0.00" width="8.33" height="8.5" fill="#1a1a1a"/><rect x="17.16" y="0.50" width="7.4" height="7.6" fill="#00ff00"/><rect x="24.99" y="0.00" width="8.33" height="8.5" fill="#1a1a1a"/><rect x="25.49" y="0.50" width="7.4" height="7.6" fill="#00ffff"/><rect x="33.32" y="0.00" width="8.33" height="8.5" fill="#1a1a1a"/><rect x="33.82" y="0.50" width="7.4" height="7.6" fill="#0000ff"/><rect x="41.65" y="0.00" width="8.33" height="8.5" fill="#1a1a1a"/><rect x="42.15" y="0.50" width="7.4" height="7.6" fill="#ff00ff"/><rect x="49.98" y="0.00" width="8.33" height="8.5" fill="#1a1a1a"/><rect x="50.48" y="0.50" width="7.4" height="7.6" fill="#ffffff"/><rect x="58.31" y="0.00" width="8.33" height="8.5" fill="#1a1a1a"/><rect x="58.81" y="0.50" width="7.4" height="7.6" fill="#f0f0f0"/><rect x="66.64" y="0.00" width="8.33" height="8.5" fill="#1a1a1a"/><rect x="67.14" y="0.50" width="7.4" height="7.6" fill="#e4e4e4"/><rect x="74.97" y="0.00" width="8.33" height="8.5" fill="#1a1a1a"/><rect x="75.47" y="0.50" width="7.4" height="7.6" fill="#dadada"/><rect x="83.30" y="0.00" width="8.33" height="8.5" fill="#1a1a1a"/><rect x="83.80" y="0.50" width="7.4" height="7.6" fill="#d0d0d0"/><rect x="91.63" y="0.00" width="8.33" height="8.5" fill="#1a1a1a"/><rect x="92.13" y="0.50" width="7.4" height="7.6" fill="#c8c8c8"/><rect x="99.96" y="0.00" width="8.33" height="8.5" fill="#1a1a1a"/><rect x="100.46" y="0.50" width="7.4" height="7.6" fill="#bebebe"/><rect x="108.29" y="0.00" width="8.33" height="8.5" fill="#1a1a1a"/><rect x="108.79" y="0.50" width="7.4" height="7.6" fill="#b4b4b4"/><rect x="116.62" y="0.00" width="8.33" height="8.5" fill="#1a1a1a"/><rect x="117.12" y="0.50" width="7.4" height="7.6" fill="#aaaaaa"/><rect x="124.95" y="0.00" width="8.33" height="8.5" fill="#1a1a1a"/><rect x="125.45" y="0.50" width="7.4" height="7.6" fill="#a4a4a4"/><rect x="133.28" y="0.00" width="8.33" height="8.5" fill="#1a1a1a"/><rect x="133.78" y="0.50" width="7.4" height="7.6" fill="#e60012"/><rect x="141.61" y="0.00" width="8.33" height="8.5" fill="#1a1a1a"/><rect x="142.11" y="0.50" width="7.4" height="7.6" fill="#fff100"/><rect x="0.00" y="8.50" width="8.33" height="8.5" fill="#1a1a1a"/><rect x="0.50" y="9.00" width="7.4" height="7.6" fill="#00a651"/><rect x="8.33" y="8.50" width="8.33" height="8.5" fill="#1a1a1a"/><rect x="8.83" y="9.00" width="7.4" height="7.6" fill="#00a0e9"/><rect x="16.66" y="8.50" width="8.33" height="8.5" fill="#1a1a1a"/><rect x="17.16" y="9.00" width="7.4" height="7.6" fill="#1d2088"/><rect x="24.99" y="8.50" width="8.33" height="8.5" fill="#1a1a1a"/><rect x="25.49" y="9.00" width="7.4" height="7.6" fill="#e4007f"/><rect x="33.32" y="8.50" width="8.33" height="8.5" fill="#1a1a1a"/><rect x="33.82" y="9.00" width="7.4" height="7.6" fill="#a0a0a0"/><rect x="41.65" y="8.50" width="8.33" height="8.5" fill="#1a1a1a"/><rect x="42.15" y="9.00" width="7.4" height="7.6" fill="#989898"/><rect x="49.98" y="8.50" width="8.33" height="8.5" fill="#1a1a1a"/><rect x="50.48" y="9.00" width="7.4" height="7.6" fill="#8c8c8c"/><rect x="58.31" y="8.50" width="8.33" height="8.5" fill="#1a1a1a"/><rect x="58.81" y="9.00" width="7.4" height="7.6" fill="#828282"/><rect x="66.64" y="8.50" width="8.33" height="8.5" fill="#1a1a1a"/><rect x="67.14" y="9.00" width="7.4" height="7.6" fill="#6e6e6e"/><rect x="74.97" y="8.50" width="8.33" height="8.5" fill="#1a1a1a"/><rect x="75.47" y="9.00" width="7.4" height="7.6" fill="#5e5e5e"/><rect x="83.30" y="8.50" width="8.33" height="8.5" fill="#1a1a1a"/><rect x="83.80" y="9.00" width="7.4" height="7.6" fill="#4c4c4c"/><rect x="91.63" y="8.50" width="8.33" height="8.5" fill="#1a1a1a"/><rect x="92.13" y="9.00" width="7.4" height="7.6" fill="#2e2e2e"/><rect x="99.96" y="8.50" width="8.33" height="8.5" fill="#1a1a1a"/><rect x="100.46" y="9.00" width="7.4" height="7.6" fill="#161616"/><rect x="108.29" y="8.50" width="8.33" height="8.5" fill="#1a1a1a"/><rect x="108.79" y="9.00" width="7.4" height="7.6" fill="#000000"/><rect x="116.62" y="8.50" width="8.33" height="8.5" fill="#1a1a1a"/><rect x="117.12" y="9.00" width="7.4" height="7.6" fill="#f19c7a"/><rect x="124.95" y="8.50" width="8.33" height="8.5" fill="#1a1a1a"/><rect x="125.45" y="9.00" width="7.4" height="7.6" fill="#f5b08a"/><rect x="133.28" y="8.50" width="8.33" height="8.5" fill="#1a1a1a"/><rect x="133.78" y="9.00" width="7.4" height="7.6" fill="#f8c88e"/><rect x="141.61" y="8.50" width="8.33" height="8.5" fill="#1a1a1a"/><rect x="142.11" y="9.00" width="7.4" height="7.6" fill="#fff59a"/><rect x="0.00" y="17.00" width="8.33" height="8.5" fill="#1a1a1a"/><rect x="0.50" y="17.50" width="7.4" height="7.6" fill="#d4e6a0"/><rect x="8.33" y="17.00" width="8.33" height="8.5" fill="#1a1a1a"/><rect x="8.83" y="17.50" width="7.4" height="7.6" fill="#b4dca0"/><rect x="16.66" y="17.00" width="8.33" height="8.5" fill="#1a1a1a"/><rect x="17.16" y="17.50" width="7.4" height="7.6" fill="#a0d4a8"/><rect x="24.99" y="17.00" width="8.33" height="8.5" fill="#1a1a1a"/><rect x="25.49" y="17.50" width="7.4" height="7.6" fill="#8cd2c8"/><rect x="33.32" y="17.00" width="8.33" height="8.5" fill="#1a1a1a"/><rect x="33.82" y="17.50" width="7.4" height="7.6" fill="#8cd0f0"/><rect x="41.65" y="17.00" width="8.33" height="8.5" fill="#1a1a1a"/><rect x="42.15" y="17.50" width="7.4" height="7.6" fill="#8cb4e6"/><rect x="49.98" y="17.00" width="8.33" height="8.5" fill="#1a1a1a"/><rect x="50.48" y="17.50" width="7.4" height="7.6" fill="#9ca0dc"/><rect x="58.31" y="17.00" width="8.33" height="8.5" fill="#1a1a1a"/><rect x="58.81" y="17.50" width="7.4" height="7.6" fill="#a890d0"/><rect x="66.64" y="17.00" width="8.33" height="8.5" fill="#1a1a1a"/><rect x="67.14" y="17.50" width="7.4" height="7.6" fill="#c08cc8"/><rect x="74.97" y="17.00" width="8.33" height="8.5" fill="#1a1a1a"/><rect x="75.47" y="17.50" width="7.4" height="7.6" fill="#d29ac8"/><rect x="83.30" y="17.00" width="8.33" height="8.5" fill="#1a1a1a"/><rect x="83.80" y="17.50" width="7.4" height="7.6" fill="#f0a0c8"/><rect x="91.63" y="17.00" width="8.33" height="8.5" fill="#1a1a1a"/><rect x="92.13" y="17.50" width="7.4" height="7.6" fill="#f4a6a6"/><rect x="99.96" y="17.00" width="8.33" height="8.5" fill="#1a1a1a"/><rect x="100.46" y="17.50" width="7.4" height="7.6" fill="#ef7a55"/><rect x="108.29" y="17.00" width="8.33" height="8.5" fill="#1a1a1a"/><rect x="108.79" y="17.50" width="7.4" height="7.6" fill="#f39a5a"/><rect x="116.62" y="17.00" width="8.33" height="8.5" fill="#1a1a1a"/><rect x="117.12" y="17.50" width="7.4" height="7.6" fill="#f8b45a"/><rect x="124.95" y="17.00" width="8.33" height="8.5" fill="#1a1a1a"/><rect x="125.45" y="17.50" width="7.4" height="7.6" fill="#fff05a"/><rect x="133.28" y="17.00" width="8.33" height="8.5" fill="#1a1a1a"/><rect x="133.78" y="17.50" width="7.4" height="7.6" fill="#b5d87a"/><rect x="141.61" y="17.00" width="8.33" height="8.5" fill="#1a1a1a"/><rect x="142.11" y="17.50" width="7.4" height="7.6" fill="#8acd8a"/><rect x="0.00" y="25.50" width="8.33" height="8.5" fill="#1a1a1a"/><rect x="0.50" y="26.00" width="7.4" height="7.6" fill="#3cb478"/><rect x="8.33" y="25.50" width="8.33" height="8.5" fill="#1a1a1a"/><rect x="8.83" y="26.00" width="7.4" height="7.6" fill="#28b4b4"/><rect x="16.66" y="25.50" width="8.33" height="8.5" fill="#1a1a1a"/><rect x="17.16" y="26.00" width="7.4" height="7.6" fill="#1eb4e6"/><rect x="24.99" y="25.50" width="8.33" height="8.5" fill="#1a1a1a"/><rect x="25.49" y="26.00" width="7.4" height="7.6" fill="#4b9bdc"/><rect x="33.32" y="25.50" width="8.33" height="8.5" fill="#1a1a1a"/><rect x="33.82" y="26.00" width="7.4" height="7.6" fill="#5a82c8"/><rect x="41.65" y="25.50" width="8.33" height="8.5" fill="#1a1a1a"/><rect x="42.15" y="26.00" width="7.4" height="7.6" fill="#7864b4"/><rect x="49.98" y="25.50" width="8.33" height="8.5" fill="#1a1a1a"/><rect x="50.48" y="26.00" width="7.4" height="7.6" fill="#9664b4"/><rect x="58.31" y="25.50" width="8.33" height="8.5" fill="#1a1a1a"/><rect x="58.81" y="26.00" width="7.4" height="7.6" fill="#b464b4"/><rect x="66.64" y="25.50" width="8.33" height="8.5" fill="#1a1a1a"/><rect x="67.14" y="26.00" width="7.4" height="7.6" fill="#e678aa"/><rect x="74.97" y="25.50" width="8.33" height="8.5" fill="#1a1a1a"/><rect x="75.47" y="26.00" width="7.4" height="7.6" fill="#f07896"/><rect x="83.30" y="25.50" width="8.33" height="8.5" fill="#1a1a1a"/><rect x="83.80" y="26.00" width="7.4" height="7.6" fill="#e60012"/><rect x="91.63" y="25.50" width="8.33" height="8.5" fill="#1a1a1a"/><rect x="92.13" y="26.00" width="7.4" height="7.6" fill="#f06e00"/><rect x="99.96" y="25.50" width="8.33" height="8.5" fill="#1a1a1a"/><rect x="100.46" y="26.00" width="7.4" height="7.6" fill="#f39800"/><rect x="108.29" y="25.50" width="8.33" height="8.5" fill="#1a1a1a"/><rect x="108.79" y="26.00" width="7.4" height="7.6" fill="#fff100"/><rect x="116.62" y="25.50" width="8.33" height="8.5" fill="#1a1a1a"/><rect x="117.12" y="26.00" width="7.4" height="7.6" fill="#8fc31f"/><rect x="124.95" y="25.50" width="8.33" height="8.5" fill="#1a1a1a"/><rect x="125.45" y="26.00" width="7.4" height="7.6" fill="#22ac38"/><rect x="133.28" y="25.50" width="8.33" height="8.5" fill="#1a1a1a"/><rect x="133.78" y="26.00" width="7.4" height="7.6" fill="#009944"/><rect x="141.61" y="25.50" width="8.33" height="8.5" fill="#1a1a1a"/><rect x="142.11" y="26.00" width="7.4" height="7.6" fill="#009e96"/><rect x="0.00" y="34.00" width="8.33" height="8.5" fill="#1a1a1a"/><rect x="0.50" y="34.50" width="7.4" height="7.6" fill="#0aa0e6"/><rect x="8.33" y="34.00" width="8.33" height="8.5" fill="#1a1a1a"/><rect x="8.83" y="34.50" width="7.4" height="7.6" fill="#0a78c8"/><rect x="16.66" y="34.00" width="8.33" height="8.5" fill="#1a1a1a"/><rect x="17.16" y="34.50" width="7.4" height="7.6" fill="#1e50aa"/><rect x="24.99" y="34.00" width="8.33" height="8.5" fill="#1a1a1a"/><rect x="25.49" y="34.50" width="7.4" height="7.6" fill="#32329a"/><rect x="33.32" y="34.00" width="8.33" height="8.5" fill="#1a1a1a"/><rect x="33.82" y="34.50" width="7.4" height="7.6" fill="#6e1e96"/><rect x="41.65" y="34.00" width="8.33" height="8.5" fill="#1a1a1a"/><rect x="42.15" y="34.50" width="7.4" height="7.6" fill="#961e96"/><rect x="49.98" y="34.00" width="8.33" height="8.5" fill="#1a1a1a"/><rect x="50.48" y="34.50" width="7.4" height="7.6" fill="#e6007e"/><rect x="58.31" y="34.00" width="8.33" height="8.5" fill="#1a1a1a"/><rect x="58.81" y="34.50" width="7.4" height="7.6" fill="#e6145a"/><rect x="66.64" y="34.00" width="8.33" height="8.5" fill="#1a1a1a"/><rect x="67.14" y="34.50" width="7.4" height="7.6" fill="#c8001e"/><rect x="74.97" y="34.00" width="8.33" height="8.5" fill="#1a1a1a"/><rect x="75.47" y="34.50" width="7.4" height="7.6" fill="#c85000"/><rect x="83.30" y="34.00" width="8.33" height="8.5" fill="#1a1a1a"/><rect x="83.80" y="34.50" width="7.4" height="7.6" fill="#d28c00"/><rect x="91.63" y="34.00" width="8.33" height="8.5" fill="#1a1a1a"/><rect x="92.13" y="34.50" width="7.4" height="7.6" fill="#c8b400"/><rect x="99.96" y="34.00" width="8.33" height="8.5" fill="#1a1a1a"/><rect x="100.46" y="34.50" width="7.4" height="7.6" fill="#64a01e"/><rect x="108.29" y="34.00" width="8.33" height="8.5" fill="#1a1a1a"/><rect x="108.79" y="34.50" width="7.4" height="7.6" fill="#1e9632"/><rect x="116.62" y="34.00" width="8.33" height="8.5" fill="#1a1a1a"/><rect x="117.12" y="34.50" width="7.4" height="7.6" fill="#00964b"/><rect x="124.95" y="34.00" width="8.33" height="8.5" fill="#1a1a1a"/><rect x="125.45" y="34.50" width="7.4" height="7.6" fill="#00968c"/><rect x="133.28" y="34.00" width="8.33" height="8.5" fill="#1a1a1a"/><rect x="133.78" y="34.50" width="7.4" height="7.6" fill="#1e8cc8"/><rect x="141.61" y="34.00" width="8.33" height="8.5" fill="#1a1a1a"/><rect x="142.11" y="34.50" width="7.4" height="7.6" fill="#0064a0"/><rect x="0.00" y="42.50" width="8.33" height="8.5" fill="#1a1a1a"/><rect x="0.50" y="43.00" width="7.4" height="7.6" fill="#1e3c96"/><rect x="8.33" y="42.50" width="8.33" height="8.5" fill="#1a1a1a"/><rect x="8.83" y="43.00" width="7.4" height="7.6" fill="#1e1e82"/><rect x="16.66" y="42.50" width="8.33" height="8.5" fill="#1a1a1a"/><rect x="17.16" y="43.00" width="7.4" height="7.6" fill="#46147a"/><rect x="24.99" y="42.50" width="8.33" height="8.5" fill="#1a1a1a"/><rect x="25.49" y="43.00" width="7.4" height="7.6" fill="#6e0a78"/><rect x="33.32" y="42.50" width="8.33" height="8.5" fill="#1a1a1a"/><rect x="33.82" y="43.00" width="7.4" height="7.6" fill="#a0005a"/><rect x="41.65" y="42.50" width="8.33" height="8.5" fill="#1a1a1a"/><rect x="42.15" y="43.00" width="7.4" height="7.6" fill="#b4003c"/><rect x="49.98" y="42.50" width="8.33" height="8.5" fill="#1a1a1a"/><rect x="50.48" y="43.00" width="7.4" height="7.6" fill="#a00014"/><rect x="58.31" y="42.50" width="8.33" height="8.5" fill="#1a1a1a"/><rect x="58.81" y="43.00" width="7.4" height="7.6" fill="#a03c00"/><rect x="66.64" y="42.50" width="8.33" height="8.5" fill="#1a1a1a"/><rect x="67.14" y="43.00" width="7.4" height="7.6" fill="#aa6400"/><rect x="74.97" y="42.50" width="8.33" height="8.5" fill="#1a1a1a"/><rect x="75.47" y="43.00" width="7.4" height="7.6" fill="#a09600"/><rect x="83.30" y="42.50" width="8.33" height="8.5" fill="#1a1a1a"/><rect x="83.80" y="43.00" width="7.4" height="7.6" fill="#4b9628"/><rect x="91.63" y="42.50" width="8.33" height="8.5" fill="#1a1a1a"/><rect x="92.13" y="43.00" width="7.4" height="7.6" fill="#00822d"/><rect x="99.96" y="42.50" width="8.33" height="8.5" fill="#1a1a1a"/><rect x="100.46" y="43.00" width="7.4" height="7.6" fill="#007846"/><rect x="108.29" y="42.50" width="8.33" height="8.5" fill="#1a1a1a"/><rect x="108.79" y="43.00" width="7.4" height="7.6" fill="#00786e"/><rect x="116.62" y="42.50" width="8.33" height="8.5" fill="#1a1a1a"/><rect x="117.12" y="43.00" width="7.4" height="7.6" fill="#0064a0"/><rect x="124.95" y="42.50" width="8.33" height="8.5" fill="#1a1a1a"/><rect x="125.45" y="43.00" width="7.4" height="7.6" fill="#003c8c"/><rect x="133.28" y="42.50" width="8.33" height="8.5" fill="#1a1a1a"/><rect x="133.78" y="43.00" width="7.4" height="7.6" fill="#1e2878"/><rect x="141.61" y="42.50" width="8.33" height="8.5" fill="#1a1a1a"/><rect x="142.11" y="43.00" width="7.4" height="7.6" fill="#000064"/><rect x="0.00" y="51.00" width="8.33" height="8.5" fill="#1a1a1a"/><rect x="0.50" y="51.50" width="7.4" height="7.6" fill="#3c0a64"/><rect x="8.33" y="51.00" width="8.33" height="8.5" fill="#1a1a1a"/><rect x="8.83" y="51.50" width="7.4" height="7.6" fill="#5a0a5a"/><rect x="16.66" y="51.00" width="8.33" height="8.5" fill="#1a1a1a"/><rect x="17.16" y="51.50" width="7.4" height="7.6" fill="#78005a"/><rect x="24.99" y="51.00" width="8.33" height="8.5" fill="#1a1a1a"/><rect x="25.49" y="51.50" width="7.4" height="7.6" fill="#8c0a3c"/><rect x="33.32" y="51.00" width="8.33" height="8.5" fill="#1a1a1a"/><rect x="33.82" y="51.50" width="7.4" height="7.6" fill="#e6d2aa"/><rect x="41.65" y="51.00" width="8.33" height="8.5" fill="#1a1a1a"/><rect x="42.15" y="51.50" width="7.4" height="7.6" fill="#c8b496"/><rect x="49.98" y="51.00" width="8.33" height="8.5" fill="#1a1a1a"/><rect x="50.48" y="51.50" width="7.4" height="7.6" fill="#a08c78"/><rect x="58.31" y="51.00" width="8.33" height="8.5" fill="#1a1a1a"/><rect x="58.81" y="51.50" width="7.4" height="7.6" fill="#7d6e64"/><rect x="66.64" y="51.00" width="8.33" height="8.5" fill="#1a1a1a"/><rect x="67.14" y="51.50" width="7.4" height="7.6" fill="#3c3232"/><rect x="74.97" y="51.00" width="8.33" height="8.5" fill="#1a1a1a"/><rect x="75.47" y="51.50" width="7.4" height="7.6" fill="#d2aa78"/><rect x="83.30" y="51.00" width="8.33" height="8.5" fill="#1a1a1a"/><rect x="83.80" y="51.50" width="7.4" height="7.6" fill="#c8a064"/><rect x="91.63" y="51.00" width="8.33" height="8.5" fill="#1a1a1a"/><rect x="92.13" y="51.50" width="7.4" height="7.6" fill="#b48246"/><rect x="99.96" y="51.00" width="8.33" height="8.5" fill="#1a1a1a"/><rect x="100.46" y="51.50" width="7.4" height="7.6" fill="#a0642d"/><rect x="108.29" y="51.00" width="8.33" height="8.5" fill="#1a1a1a"/><rect x="108.79" y="51.50" width="7.4" height="7.6" fill="#8c4614"/><rect x="116.62" y="51.00" width="8.33" height="8.5" fill="#1a1a1a"/><rect x="117.12" y="51.50" width="7.4" height="7.6" fill="#147828"/><rect x="124.95" y="51.00" width="8.33" height="8.5" fill="#1a1a1a"/><rect x="125.45" y="51.50" width="7.4" height="7.6" fill="#3c64e6"/></svg>
<div style="left:985px;top:64px;width:4px;height:88px;background:#232323;"></div>
<div style="left:989px;top:64px;width:1px;height:88px;background:#1e1e1e;"></div>
<div style="left:833px;top:152px;width:167px;height:3px;background:#1c1c1c;"></div>
<div style="left:833px;top:155px;width:167px;height:9px;background:#222222;"></div>
<svg style="position:absolute;left:981px;top:157px;" width="6" height="4" viewBox="0 0 6 4"><path d="M2.5 0.5L0 2L2.5 3.5Z M5 0.5L2.5 2L5 3.5Z" fill="#d0d0d0"/></svg>
<div style="left:833px;top:164px;width:152px;height:11px;background:#202020;"></div>
<div style="left:835px;top:164px;width:26px;height:11px;background:#2a2a2a;"></div>
<div class="t" style="left:841px;top:165.5px;font-size:8.5px;color:#a0a0a0;">通道</div>
<div style="left:862px;top:164px;width:21px;height:11px;background:#2a2a2a;"></div>
<div class="t" style="left:864px;top:165.5px;font-size:8.5px;color:#a0a0a0;">字符</div>
<div style="left:884px;top:164px;width:21px;height:11px;background:#2a2a2a;"></div>
<div class="t" style="left:886px;top:165.5px;font-size:8.5px;color:#a0a0a0;">属性</div>
<div style="left:906px;top:164px;width:28px;height:11px;background:#2a2a2a;"></div>
<div class="t" style="left:908px;top:165.5px;font-size:8.5px;color:#a0a0a0;">导航器</div>
<div style="left:935px;top:164px;width:38px;height:11px;background:#363636;"></div>
<div class="t" style="left:937px;top:165.5px;font-size:8.5px;color:#d8d8d8;">历史记录</div>
<div style="left:833px;top:175px;width:156px;height:170px;background:#2b2b2b;"></div>
<div style="left:989px;top:175px;width:1px;height:170px;background:#1c1c1c;"></div>
<div style="left:990px;top:175px;width:10px;height:170px;background:#2c2c2c;"></div>
<svg style="position:absolute;left:839px;top:184px;" width="12" height="10" viewBox="0 0 12 10"><path d="M10 1.5L5.5 6.5" stroke="#bdbdbd" stroke-width="1.5"/><ellipse cx="3.8" cy="7.6" rx="2.8" ry="1.5" transform="rotate(-35 3.8 7.6)" fill="#c8c8c8"/><path d="M1.5 4C2.5 2.3 4.5 1.8 6.5 2.6" stroke="#c0c0c0" stroke-width="1.5" fill="none"/></svg>
<div style="left:853px;top:177px;width:23px;height:23px;background:#1a1a1a;"></div>
<div style="left:854px;top:178px;width:21px;height:21px;background:#ffffff;"></div>
<div class="t" style="left:879px;top:183.5px;font-size:9px;color:#d0d0d0;">未标题-1</div>
<div style="left:836px;top:203px;width:153px;height:1px;background:#1e1e1e;"></div>
<div style="left:840px;top:208px;width:8px;height:8px;background:#262626;"></div>
<svg style="position:absolute;left:857px;top:206.5px;" width="12" height="13" viewBox="0 0 12 13"><rect x="1" y="1" width="10" height="10.5" fill="#a4a4a4"/><rect x="1" y="1" width="6.5" height="2" fill="#d0d0d0"/><rect x="2.6" y="3.6" width="6.8" height="6.4" fill="#888" stroke="#5c5c5c" stroke-width="0.8"/></svg>
<div class="t" style="left:877px;top:207.8px;font-size:8.5px;color:#d0d0d0;">新建</div>
<div style="left:836px;top:219px;width:153px;height:1px;background:#242424;"></div>
<div style="left:840px;top:224px;width:8px;height:8px;background:#262626;"></div>
<svg style="position:absolute;left:857px;top:222.5px;" width="12" height="13" viewBox="0 0 12 13"><rect x="1" y="1" width="10" height="10.5" fill="#a4a4a4"/><rect x="1" y="1" width="6.5" height="2" fill="#d0d0d0"/><rect x="2.6" y="3.6" width="6.8" height="6.4" fill="#888" stroke="#5c5c5c" stroke-width="0.8"/></svg>
<div class="t" style="left:877px;top:223.8px;font-size:8.5px;color:#d0d0d0;">椭圆工具</div>
<div style="left:836px;top:235px;width:153px;height:1px;background:#242424;"></div>
<div style="left:834px;top:236px;width:155px;height:16px;background:#4b5366;"></div>
<div style="left:840px;top:240px;width:8px;height:8px;background:#424a5e;"></div>
<svg style="position:absolute;left:857px;top:238.5px;" width="12" height="13" viewBox="0 0 12 13"><rect x="1" y="1" width="10" height="10.5" fill="#a4a4a4"/><rect x="1" y="1" width="6.5" height="2" fill="#d0d0d0"/><rect x="2.6" y="3.6" width="6.8" height="6.4" fill="#888" stroke="#5c5c5c" stroke-width="0.8"/></svg>
<div class="t" style="left:877px;top:239.8px;font-size:8.5px;color:#d0d0d0;">填充图层</div>
<div style="left:836px;top:251px;width:153px;height:1px;background:#242424;"></div>
<div style="left:833px;top:345px;width:167px;height:14px;background:#2e2e2e;"></div>
<div style="left:833px;top:345px;width:167px;height:1px;background:#1e1e1e;"></div>
<svg style="position:absolute;left:927px;top:347px;" width="12" height="10" viewBox="0 0 12 10"><rect x="5" y="1" width="6" height="7" fill="#b8b8b8"/><rect x="6.5" y="3" width="3" height="4" fill="#777"/><path d="M1 6.5H6.5M3.75 3.75V9.25" stroke="#e8e8e8" stroke-width="1.6"/></svg>
<svg style="position:absolute;left:950px;top:347px;" width="11" height="10" viewBox="0 0 11 10"><rect x="0.5" y="2.5" width="10" height="6.5" fill="#c4c4c4"/><rect x="3" y="1" width="5" height="2" fill="#c4c4c4"/><circle cx="5.5" cy="5.7" r="2.2" fill="#4a4a4a"/><circle cx="5.5" cy="5.7" r="0.9" fill="#ddd"/></svg>
<svg style="position:absolute;left:970px;top:346px;" width="11" height="11" viewBox="0 0 11 11"><path d="M1 4.5L5.5 1.5L10 4.5Z" fill="#b8b8b8"/><rect x="1.5" y="5" width="8" height="5" fill="#8c8c8c"/><rect x="3" y="6" width="5" height="3" fill="#7a7a7a"/></svg>
<div style="left:833px;top:359px;width:167px;height:3px;background:#1c1c1c;"></div>
<div style="left:911px;top:360px;width:14px;height:2px;background:#0e0e0e;"></div>
<div style="left:833px;top:362px;width:167px;height:159px;background:#2b2b2b;"></div>
<div style="left:837px;top:364px;width:76px;height:13px;background:#424242;border:1px solid #1e1e1e;box-sizing:border-box;background:linear-gradient(#4a4a4a,#3c3c3c);"></div>
<div class="t" style="left:842px;top:364.5px;font-size:8.5px;color:#d8d8d8;">正常</div>
<svg style="position:absolute;left:906px;top:366px;" width="5" height="8" viewBox="0 0 5 8"><path d="M0.5 3L2.5 0.5L4.5 3ZM0.5 5L2.5 7.5L4.5 5Z" fill="#bdbdbd"/></svg>
<div class="t" style="left:919px;top:365px;font-size:8.5px;color:#c8c8c8;">不透明度:</div>
<div style="left:959px;top:364px;width:24px;height:13px;background:#1c1c1c;"></div>
<div class="t" style="left:960px;top:365.5px;font-size:9px;color:#d8d8d8;transform:scaleX(0.9);transform-origin:0 0;">100%</div>
<div style="left:983px;top:364px;width:13px;height:13px;background:#4a4a4a;border:1px solid #2a2a2a;box-sizing:border-box;"></div>
<svg style="position:absolute;left:987px;top:369px;" width="5" height="3" viewBox="0 0 5 3"><path d="M0 0H5L2.5 3Z" fill="#d0d0d0"/></svg>
<div style="left:834px;top:380px;width:166px;height:1px;background:#1e1e1e;"></div>
<div class="t" style="left:838px;top:384px;font-size:8.5px;color:#c8c8c8;">锁定:</div>
<svg style="position:absolute;left:863px;top:385px;" width="10" height="10" viewBox="0 0 10 10"><rect x="0.5" y="0.5" width="9" height="9" fill="#5a5a5a"/><rect x="0.5" y="0.5" width="4.5" height="4.5" fill="#7a7a7a"/><rect x="5" y="5" width="4.5" height="4.5" fill="#7a7a7a"/></svg>
<svg style="position:absolute;left:878px;top:384px;" width="13" height="11" viewBox="0 0 13 11"><path d="M3 9L11.5 1" stroke="#7a7a7a" stroke-width="1.5"/><path d="M0.5 10.5C2 8 3 7.5 4.5 8.5C4 10 2 10.5 0.5 10.5Z" fill="#7a7a7a"/></svg>
<svg style="position:absolute;left:893px;top:384px;" width="12" height="11" viewBox="0 0 12 11"><path d="M6 1V10M1.5 5.5H10.5" stroke="#b0b0b0" stroke-width="1.3"/><path d="M6 0L4 2.5H8ZM6 11L4 8.5H8ZM0 5.5L2.5 3.5V7.5ZM12 5.5L9.5 3.5V7.5Z" fill="#b0b0b0"/></svg>
<svg style="position:absolute;left:910px;top:384px;" width="10" height="11" viewBox="0 0 10 11"><path d="M2.5 5V3.5A2.5 2.5 0 0 1 7.5 3.5V5" fill="none" stroke="#c0c0c0" stroke-width="1.4"/><rect x="1" y="5" width="8" height="6" fill="#c0c0c0"/></svg>
<div class="t" style="left:936px;top:384px;font-size:8.5px;color:#c8c8c8;">填充:</div>
<div style="left:959px;top:383px;width:24px;height:13px;background:#1c1c1c;"></div>
<div class="t" style="left:960px;top:384.5px;font-size:9px;color:#d8d8d8;transform:scaleX(0.9);transform-origin:0 0;">100%</div>
<div style="left:983px;top:383px;width:13px;height:13px;background:#4a4a4a;border:1px solid #2a2a2a;box-sizing:border-box;"></div>
<svg style="position:absolute;left:987px;top:388px;" width="5" height="3" viewBox="0 0 5 3"><path d="M0 0H5L2.5 3Z" fill="#d0d0d0"/></svg>
<div style="left:834px;top:399px;width:155px;height:1px;background:#1e1e1e;"></div>
<div style="left:856px;top:400px;width:133px;height:27px;background:#4b5366;"></div>
<svg style="position:absolute;left:839px;top:410px;" width="11" height="7" viewBox="0 0 11 7"><path d="M0.5 3.5C2.5 0.5 8.5 0.5 10.5 3.5C8.5 6.5 2.5 6.5 0.5 3.5Z" fill="#a8a8a8"/><circle cx="5.5" cy="3.5" r="1.6" fill="#2b2b2b"/></svg>
<svg style="position:absolute;left:856px;top:401px;" width="26" height="26" viewBox="0 0 26 26"><rect x="0.5" y="0.5" width="25" height="25" fill="none" stroke="#7a8090" stroke-width="1"/><path d="M0.5 6V0.5H6M20 0.5H25.5V6M25.5 20V25.5H20M6 25.5H0.5V20" fill="none" stroke="#e0e0e0" stroke-width="1.2"/><rect x="1.5" y="1.5" width="23" height="23" fill="#14202a"/><rect x="2.5" y="2.5" width="21" height="21" fill="#ffffff"/><rect x="2.5" y="2.5" width="21" height="21" rx="6" fill="#72e1f5"/><rect x="14" y="14" width="10.5" height="10.5" fill="#14202a"/><rect x="15.5" y="15.5" width="8" height="8" fill="#4a4e58" stroke="#9a9ea8" stroke-width="1"/><rect x="17.5" y="17.5" width="4" height="4" fill="#3a3e48" stroke="#777" stroke-width="0.6"/></svg>
<div class="t" style="left:887px;top:410.5px;font-size:8.5px;color:#d8d8d8;">椭圆 1</div>
<div style="left:834px;top:427px;width:155px;height:1px;background:#1e1e1e;"></div>
<svg style="position:absolute;left:839px;top:438px;" width="11" height="7" viewBox="0 0 11 7"><path d="M0.5 3.5C2.5 0.5 8.5 0.5 10.5 3.5C8.5 6.5 2.5 6.5 0.5 3.5Z" fill="#a8a8a8"/><circle cx="5.5" cy="3.5" r="1.6" fill="#2b2b2b"/></svg>
<div style="left:857px;top:429px;width:23px;height:24px;background:#151515;"></div>
<div style="left:858px;top:430px;width:21px;height:22px;background:#ffffff;"></div>
<div class="t" style="left:887.5px;top:438px;font-size:8.5px;color:#c8c8c8;font-style:italic;">背景</div>
<svg style="position:absolute;left:969px;top:435px;" width="9" height="11" viewBox="0 0 9 11"><path d="M2 5V3.5A2.5 2.5 0 0 1 7 3.5V5" fill="none" stroke="#b0b0b0" stroke-width="1.2"/><rect x="0.5" y="5" width="8" height="6" fill="#b0b0b0"/><rect x="4" y="7" width="1" height="2" fill="#555"/></svg>
<div style="left:834px;top:454px;width:155px;height:1px;background:#1e1e1e;"></div>
<div style="left:989px;top:400px;width:1px;height:121px;background:#1c1c1c;"></div>
<div style="left:990px;top:400px;width:10px;height:121px;background:#2c2c2c;"></div>
<svg style="position:absolute;left:838px;top:510px;" width="40" height="11" viewBox="0 0 40 11"><circle cx="10" cy="13" r="4.5" fill="#d8d8d8"/><circle cx="26.5" cy="12" r="3" fill="#bbb"/></svg>
<div style="left:986.5px;top:156.5px;width:33px;height:33px;border-radius:50%;background:#48c04f;border:1.5px solid #e4f4e4;box-sizing:border-box;"></div>
<div class="t" style="left:991px;top:167.5px;font-size:8px;color:#ffffff;font-weight:bold;">43</div>
<svg style="position:absolute;left:6px;top:65px;" width="14" height="14" viewBox="0 0 14 14"><path d="M1 1L1 11L4 8.5L7 8Z" fill="#acacac"/><path d="M10 6V13M6.5 9.5H13.5" stroke="#acacac" stroke-width="1.2"/></svg>
<svg style="position:absolute;left:6px;top:83px;" width="14" height="14" viewBox="0 0 14 14"><ellipse cx="6.5" cy="6.5" rx="5.5" ry="5" fill="none" stroke="#acacac" stroke-width="1.2" stroke-dasharray="2 1.2"/></svg>
<div style="left:20px;top:95px;width:2px;height:2px;background:#8a8a8a;"></div>
<svg style="position:absolute;left:6px;top:101px;" width="14" height="14" viewBox="0 0 14 14"><path d="M2 3C5 1 10 1 12 3C13 6 10 9 6 9C4 9 3 10 3 12" fill="none" stroke="#acacac" stroke-width="1.6"/><path d="M2 3L3 10" stroke="#acacac" stroke-width="1.5"/><circle cx="7" cy="6" r="1.5" fill="none" stroke="#acacac"/></svg>
<div style="left:20px;top:113px;width:2px;height:2px;background:#8a8a8a;"></div>
<svg style="position:absolute;left:6px;top:119px;" width="14" height="14" viewBox="0 0 14 14"><path d="M13.5 2.5L8 8" stroke="#acacac" stroke-width="1.8"/><path d="M4 10C6 8 8 8 8.5 9C8 10.5 6 11 4 10Z" fill="#acacac"/><path d="M4 3A3.5 3.5 0 0 0 3 9" fill="none" stroke="#acacac" stroke-width="1.1" stroke-dasharray="1.2 1"/></svg>
<div style="left:20px;top:131px;width:2px;height:2px;background:#8a8a8a;"></div>
<svg style="position:absolute;left:6px;top:137px;" width="14" height="14" viewBox="0 0 14 14"><path d="M4.5 1.5V9.5H11.5M2.5 5H9.5V12" fill="none" stroke="#acacac" stroke-width="1.5"/></svg>
<div style="left:20px;top:149px;width:2px;height:2px;background:#8a8a8a;"></div>
<svg style="position:absolute;left:6px;top:155px;" width="14" height="14" viewBox="0 0 14 14"><path d="M2.5 12L9 5.5" stroke="#acacac" stroke-width="2"/><path d="M8 3.5L10.5 6L13 3L11 1Z" fill="#acacac"/></svg>
<div style="left:20px;top:167px;width:2px;height:2px;background:#8a8a8a;"></div>
<svg style="position:absolute;left:6px;top:174px;" width="14" height="14" viewBox="0 0 14 14"><rect x="3" y="4" width="10" height="5" rx="2" transform="rotate(-40 8 6.5)" fill="#acacac"/><path d="M1 5V11" stroke="#acacac"/></svg>
<div style="left:20px;top:186px;width:2px;height:2px;background:#8a8a8a;"></div>
<svg style="position:absolute;left:6px;top:192px;" width="14" height="14" viewBox="0 0 14 14"><path d="M13 1L6 8" stroke="#acacac" stroke-width="1.6"/><path d="M2 9C4 8 6 9 5 11C4 12 2 12 1 12Z" fill="#acacac"/></svg>
<div style="left:20px;top:204px;width:2px;height:2px;background:#8a8a8a;"></div>
<svg style="position:absolute;left:6px;top:210px;" width="14" height="14" viewBox="0 0 14 14"><circle cx="7" cy="3" r="2.2" fill="#acacac"/><rect x="6" y="4" width="2" height="5" fill="#acacac"/><rect x="2" y="8.5" width="10" height="2.5" fill="#acacac"/><rect x="2" y="11.5" width="10" height="1" fill="#acacac"/></svg>
<div style="left:20px;top:222px;width:2px;height:2px;background:#8a8a8a;"></div>
<svg style="position:absolute;left:6px;top:228px;" width="14" height="14" viewBox="0 0 14 14"><path d="M13 1L6 8" stroke="#acacac" stroke-width="1.6"/><path d="M2 9C4 8 6 9 5 11C4 12 2 12 1 12Z" fill="#acacac"/><path d="M2 3C4 1 7 2 8 3" fill="none" stroke="#acacac" stroke-width="1.3"/></svg>
<div style="left:20px;top:240px;width:2px;height:2px;background:#8a8a8a;"></div>
<svg style="position:absolute;left:6px;top:246px;" width="14" height="14" viewBox="0 0 14 14"><path d="M1 9L8 3L13 6L6 12Z" fill="#acacac"/><path d="M1 9L6 12" stroke="#777" stroke-width="1"/></svg>
<div style="left:20px;top:258px;width:2px;height:2px;background:#8a8a8a;"></div>
<svg style="position:absolute;left:6px;top:266px;" width="14" height="12" viewBox="0 0 14 12"><defs><linearGradient id="gr"><stop offset="0" stop-color="#4a4a4a"/><stop offset="1" stop-color="#d0d0d0"/></linearGradient></defs><rect x="1.5" y="1.5" width="11" height="9.5" fill="url(#gr)" stroke="#b8b8b8"/></svg>
<div style="left:20px;top:277px;width:2px;height:2px;background:#8a8a8a;"></div>
<svg style="position:absolute;left:6px;top:283px;" width="14" height="14" viewBox="0 0 14 14"><path d="M3 2C8 -1 14 3 11 8C9 10 6 10 5 9L2 13L1 12L4 8C1 6 1 3 3 2Z" fill="#acacac"/></svg>
<div style="left:20px;top:295px;width:2px;height:2px;background:#8a8a8a;"></div>
<svg style="position:absolute;left:6px;top:301px;" width="14" height="14" viewBox="0 0 14 14"><circle cx="5" cy="5" r="4" fill="#acacac"/><path d="M8 8L12 12" stroke="#acacac" stroke-width="1.8"/></svg>
<div style="left:20px;top:313px;width:2px;height:2px;background:#8a8a8a;"></div>
<svg style="position:absolute;left:6px;top:320px;" width="14" height="14" viewBox="0 0 14 14"><path d="M9 1L13 5L7 11L2 12L3 7Z" fill="#acacac"/><path d="M2 12L6 8" stroke="#333" stroke-width="1"/></svg>
<div style="left:20px;top:332px;width:2px;height:2px;background:#8a8a8a;"></div>
<svg style="position:absolute;left:6px;top:339px;" width="14" height="14" viewBox="0 0 14 14"><path d="M1 1.5H12M6.5 1.5V12.5M4.5 12.5H8.5" stroke="#acacac" stroke-width="1.8"/></svg>
<div style="left:20px;top:351px;width:2px;height:2px;background:#8a8a8a;"></div>
<svg style="position:absolute;left:6px;top:357px;" width="14" height="14" viewBox="0 0 14 14"><path d="M2.5 1.5L2.5 12L5 9.5L8 13L9.5 12L7 8.5L10.5 8Z" fill="none" stroke="#acacac" stroke-width="1.1"/></svg>
<div style="left:20px;top:369px;width:2px;height:2px;background:#8a8a8a;"></div>
<div style="left:3px;top:375px;width:20px;height:16px;background:#1e1e1e;"></div>
<svg style="position:absolute;left:6px;top:378px;" width="14" height="11" viewBox="0 0 14 11"><ellipse cx="7" cy="5.5" rx="6" ry="4" fill="#777" stroke="#acacac" stroke-width="1.1"/></svg>
<div style="left:20px;top:387px;width:2px;height:2px;background:#8a8a8a;"></div>
<svg style="position:absolute;left:6px;top:395px;" width="14" height="14" viewBox="0 0 14 14"><path d="M2.5 7V4.2C2.5 3.2 4 3.2 4 4.2V7M4 6.5V2.2C4 1.2 5.6 1.2 5.6 2.2V6.5M5.6 6.5V1.6C5.6 0.6 7.2 0.6 7.2 1.6V6.5M7.2 6.5V2.4C7.2 1.4 8.8 1.4 8.8 2.4V8" fill="none" stroke="#acacac" stroke-width="1.3"/><path d="M2.2 6.5H9V8.2L10.6 6.6C11.4 5.8 12.6 6.6 12 7.5L9.2 12.5H4.5C3 11.5 2.2 10 2.2 8.5Z" fill="#acacac"/></svg>
<div style="left:20px;top:407px;width:2px;height:2px;background:#8a8a8a;"></div>
<svg style="position:absolute;left:6px;top:414px;" width="14" height="14" viewBox="0 0 14 14"><circle cx="5.5" cy="5.5" r="4" fill="#acacac"/><path d="M8 8L12.5 12.5" stroke="#acacac" stroke-width="2"/></svg>
<svg style="position:absolute;left:3px;top:431px;" width="8" height="8" viewBox="0 0 8 8"><rect x="3" y="3" width="4.5" height="4.5" fill="#ddd"/><rect x="0.5" y="0.5" width="4.5" height="4.5" fill="#111" stroke="#bbb" stroke-width="1"/></svg>
<svg style="position:absolute;left:14px;top:430px;" width="9" height="9" viewBox="0 0 9 9"><path d="M2.5 2.5H5C6.5 2.5 6.5 4 6.5 5.5" fill="none" stroke="#bbb" stroke-width="1.1"/><path d="M0.5 2.5L2.8 0.5V4.5Z" fill="#bbb"/><path d="M6.5 8.5L4.5 5.8H8.5Z" fill="#bbb"/></svg>
<div style="left:10px;top:450px;width:13px;height:13px;background:#000;border:1px solid #d8d8d8;box-sizing:border-box;"></div>
<div style="left:3px;top:443px;width:13px;height:13px;background:#72e1f5;border:1px solid #cfcfcf;box-sizing:border-box;"></div>
<svg style="position:absolute;left:6px;top:467px;" width="14" height="12" viewBox="0 0 14 12"><rect x="1" y="1" width="12" height="10" fill="none" stroke="#c0c0c0" stroke-width="1.2"/><circle cx="7" cy="6" r="2.5" fill="#888" stroke="#c0c0c0"/></svg>
<svg style="position:absolute;left:6px;top:486px;" width="15" height="12" viewBox="0 0 15 12"><rect x="5" y="1" width="9" height="7" fill="#707070" stroke="#c8c8c8"/><rect x="1" y="3.5" width="9" height="7" fill="#4a4a4a" stroke="#c8c8c8"/></svg>
<div style="left:21px;top:497px;width:2px;height:2px;background:#8a8a8a;"></div>
<div style="left:25px;top:373px;width:111px;height:88px;background:#2a2a2a;"></div>
<div style="left:25px;top:372.5px;width:106px;height:83.5px;background:#1e1e1e;"></div>
<div style="left:26px;top:373.5px;width:104px;height:81.5px;background:#363636;"></div>
<div style="left:26px;top:402px;width:102px;height:13.5px;background:#4a5068;"></div>
<div class="t" style="left:56px;top:376.5px;font-size:8.4px;color:#d0d0d0;transform:scaleX(1.045);transform-origin:0 0;">矩形工具</div>
<div class="t" style="left:117px;top:376.5px;font-size:8px;color:#b8b8b8;">U</div>
<div class="t" style="left:56px;top:389.9px;font-size:8.4px;color:#d0d0d0;transform:scaleX(1.045);transform-origin:0 0;">圆角矩形工具</div>
<div class="t" style="left:117px;top:389.9px;font-size:8px;color:#b8b8b8;">U</div>
<div class="t" style="left:56px;top:403.3px;font-size:8.4px;color:#d0d0d0;transform:scaleX(1.045);transform-origin:0 0;">椭圆工具</div>
<div class="t" style="left:117px;top:403.3px;font-size:8px;color:#b8b8b8;">U</div>
<div class="t" style="left:56px;top:416.7px;font-size:8.4px;color:#d0d0d0;transform:scaleX(1.045);transform-origin:0 0;">多边形工具</div>
<div class="t" style="left:117px;top:416.7px;font-size:8px;color:#b8b8b8;">U</div>
<div class="t" style="left:56px;top:430.1px;font-size:8.4px;color:#d0d0d0;transform:scaleX(1.045);transform-origin:0 0;">直线工具</div>
<div class="t" style="left:117px;top:430.1px;font-size:8px;color:#b8b8b8;">U</div>
<div class="t" style="left:56px;top:443.5px;font-size:8.4px;color:#d0d0d0;transform:scaleX(1.045);transform-origin:0 0;">自定形状工具</div>
<div class="t" style="left:117px;top:443.5px;font-size:8px;color:#b8b8b8;">U</div>
<svg style="position:absolute;left:41px;top:377px;" width="12" height="10" viewBox="0 0 12 10"><rect x="0.5" y="0.5" width="11" height="9" fill="#666" stroke="#a8a8a8"/></svg>
<svg style="position:absolute;left:41px;top:390px;" width="12" height="10" viewBox="0 0 12 10"><rect x="0.5" y="0.5" width="11" height="9" rx="2.5" fill="#666" stroke="#a8a8a8"/></svg>
<div style="left:31px;top:407px;width:3px;height:3px;background:#e0e0e0;"></div>
<svg style="position:absolute;left:41px;top:403px;" width="13" height="11" viewBox="0 0 13 11"><ellipse cx="6.5" cy="5.5" rx="6" ry="4.5" fill="#6a7088" stroke="#a8a8a8"/></svg>
<svg style="position:absolute;left:41px;top:415px;" width="12" height="12" viewBox="0 0 12 12"><path d="M3.5 1H8.5L11.5 6L8.5 11H3.5L0.5 6Z" fill="#666" stroke="#a8a8a8"/></svg>
<svg style="position:absolute;left:41px;top:428px;" width="12" height="12" viewBox="0 0 12 12"><path d="M1 11L11 1" stroke="#a8a8a8" stroke-width="1.2"/></svg>
<svg style="position:absolute;left:40px;top:441px;" width="14" height="13" viewBox="0 0 14 13"><path d="M7 1L9 4L13 3L11 7L13 11L9 10L7 13L5 10L1 11L3 7L1 3L5 4Z" fill="#777" stroke="#a8a8a8"/></svg>
</body></html>
